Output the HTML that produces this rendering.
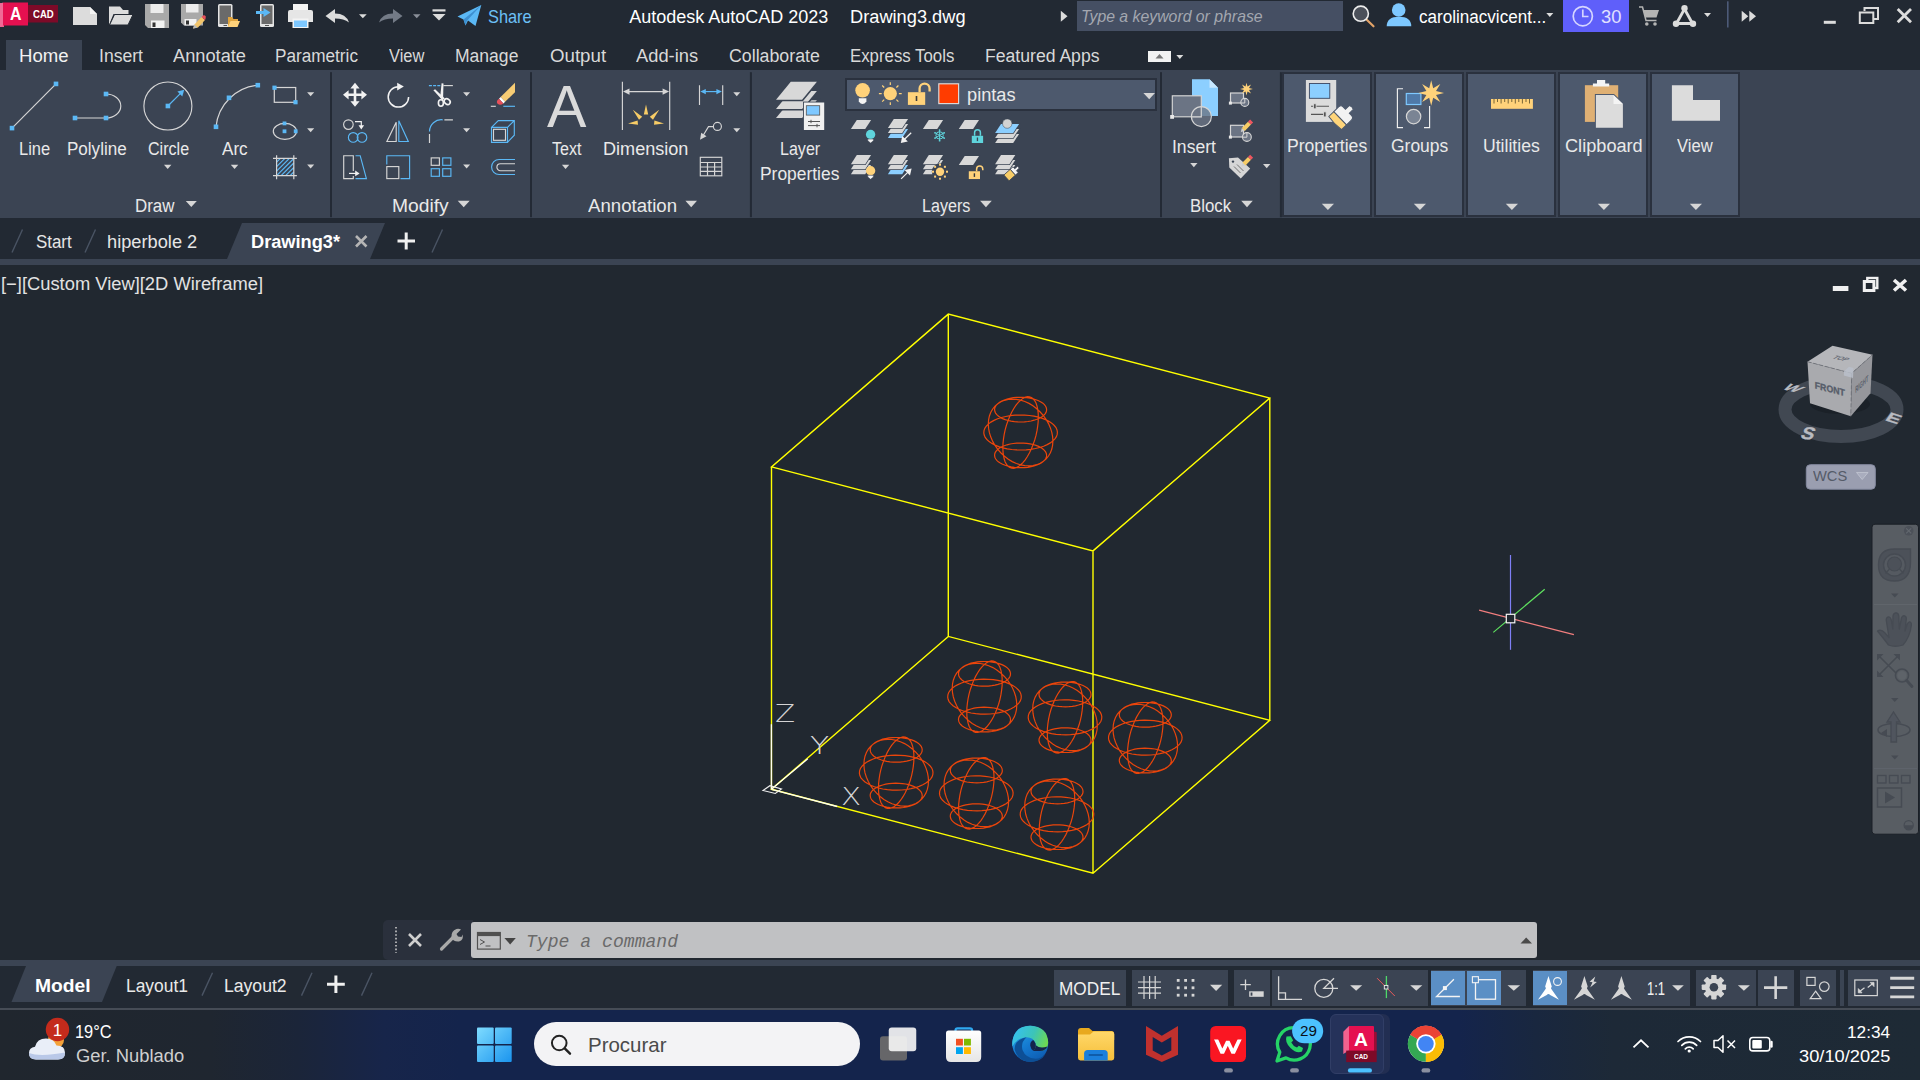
<!DOCTYPE html>
<html lang="en"><head><meta charset="utf-8"><title>Autodesk AutoCAD 2023 - Drawing3.dwg</title>
<style>
html,body{margin:0;padding:0;width:1920px;height:1080px;overflow:hidden;background:#212830;font-family:"Liberation Sans",sans-serif}
#app{position:relative;width:1920px;height:1080px;overflow:hidden}
#app>div{position:absolute;box-sizing:border-box}
#ov{position:absolute;left:0;top:0}
.t{position:absolute;white-space:pre;transform-origin:0 50%;display:block}
</style></head><body><div id="app">
<div style="left:0px;top:0px;width:1920px;height:70px;background:#222933;"></div>
<div style="left:0px;top:70px;width:1920px;height:148px;background:#3b4453;"></div>
<div style="left:0px;top:218px;width:1920px;height:41px;background:#222933;"></div>
<div style="left:0px;top:259px;width:1920px;height:6px;background:#3b4453;"></div>
<div style="left:0px;top:265px;width:1920px;height:695px;background:#212830;"></div>
<div style="left:0px;top:960px;width:1920px;height:6px;background:#3b4453;"></div>
<div style="left:0px;top:966px;width:1920px;height:42px;background:#222933;"></div>
<div style="left:1077px;top:1px;width:266px;height:30px;background:#454f63;"></div>
<div style="left:1563px;top:0px;width:66px;height:32px;background:#5f5ffa;"></div>
<div style="left:6px;top:40px;width:76px;height:30px;background:#3b4453;"></div>
<div style="left:1148px;top:51px;width:23px;height:11px;background:#f2f2f2;"></div>
<div style="left:845.3px;top:78.3px;width:311.8px;height:32.3px;background:#4d596d;border:2px solid #2a313e"></div>
<div style="left:1281.7px;top:72.2px;width:90.6px;height:144.8px;background:#4d596d;border:2px solid #2a313e"></div>
<div style="left:1373.7px;top:72.2px;width:90.6px;height:144.8px;background:#4d596d;border:2px solid #2a313e"></div>
<div style="left:1465.7px;top:72.2px;width:90.6px;height:144.8px;background:#4d596d;border:2px solid #2a313e"></div>
<div style="left:1557.7px;top:72.2px;width:90.6px;height:144.8px;background:#4d596d;border:2px solid #2a313e"></div>
<div style="left:1649.7px;top:72.2px;width:90.6px;height:144.8px;background:#4d596d;border:2px solid #2a313e"></div>
<div style="left:383px;top:920px;width:90px;height:40px;background:#2a303c;border-radius:5px 0 0 5px"></div>
<div style="left:471px;top:922px;width:1066px;height:36px;background:#c0c1c3;border-radius:3px"></div>
<div style="left:0px;top:1008px;width:1920px;height:2px;background:#464c56;"></div>
<div style="left:1054.2px;top:970px;width:71.70000000000005px;height:36px;background:#3b4453;"></div>
<div style="left:1132.1px;top:970px;width:95.80000000000018px;height:36px;background:#3b4453;"></div>
<div style="left:1234.2px;top:970px;width:35.700000000000045px;height:36px;background:#3b4453;"></div>
<div style="left:1272.1px;top:970px;width:155.80000000000018px;height:36px;background:#3b4453;"></div>
<div style="left:1430.8px;top:970px;width:95.29999999999995px;height:36px;background:#3b4453;"></div>
<div style="left:1430.8px;top:971px;width:34px;height:33.8px;background:#5b8fc5;"></div>
<div style="left:1466.8px;top:971px;width:34px;height:33.8px;background:#5b8fc5;"></div>
<div style="left:1532.8px;top:970px;width:156.79999999999995px;height:36px;background:#3b4453;"></div>
<div style="left:1532.8px;top:971px;width:34.4px;height:33.8px;background:#5b8fc5;"></div>
<div style="left:1695.7px;top:970px;width:60.09999999999991px;height:36px;background:#3b4453;"></div>
<div style="left:1758.1px;top:970px;width:36.0px;height:36px;background:#3b4453;"></div>
<div style="left:1800.1px;top:970px;width:36.0px;height:36px;background:#3b4453;"></div>
<div style="left:1839.8px;top:970px;width:4.100000000000136px;height:36px;background:#3b4453;"></div>
<div style="left:1848px;top:970px;width:72px;height:36px;background:#3b4453;"></div>
<div style="left:0px;top:1010px;width:1920px;height:70px;background:linear-gradient(90deg,#20262e 0%,#1f2630 11%,#1b2539 15.500%,#17254a 20%,#14244c 24%,#14244c 76%,#19273f 80%,#1d2937 84%,#1e2a35 100%);"></div>
<div style="left:533.75px;top:1022px;width:326.25px;height:44.25px;background:#f3f3f5;border-radius:22.200px"></div>
<div style="left:1337px;top:1014px;width:52.6px;height:59.6px;background:#222e52;border-radius:7px"></div>
<div style="left:1330px;top:1014px;width:53.5px;height:59.6px;background:#25325a;border-radius:6px;border:1px solid #313e66"></div>
<svg id="ov" width="1920" height="1080" viewBox="0 0 1920 1080">
<rect x="0" y="3" width="4" height="24" fill="#f0628f"/>
<path d="M3 2.5H28V25.5H3Z" fill="#e51050"/>
<path d="M0 27L3 25.5V2.5L0 4Z" fill="#f06a96"/>
<rect x="28" y="5" width="30" height="17.5" fill="#7d0a28"/>
<path d="M73 7H90L97 14V25H73Z" fill="#dcdcdc"/><path d="M90 7V14H97Z" fill="#f4f4f4"/>
<path d="M109 25V6.5H120L123 10H128.5V14H113.5L109 25Z" fill="#dcdcdc"/><path d="M114.5 14.5H133L128 25H109.5Z" fill="#dcdcdc" stroke="#222933" stroke-width="1"/>
<path d="M145 4H169V28H148L145 25Z" fill="#a9a9a9"/><rect x="150.5" y="4" width="13" height="9" fill="#ececec"/><rect x="151" y="20.5" width="13.5" height="7.5" fill="#f2f2f2"/><rect x="152.5" y="22.5" width="3" height="4.5" fill="#333"/>
<path d="M181 4H203V25.5H184L181 22.5Z" fill="#a9a9a9"/><rect x="186" y="4" width="12.5" height="8.5" fill="#ececec"/><rect x="184.5" y="19" width="12" height="6.5" fill="#f2f2f2"/><rect x="186" y="20.5" width="3" height="4" fill="#333"/>
<path d="M194.5 24.5L201.5 17L205 20L198 27.5L193 28.5Z" fill="#f2c46a"/><path d="M201.5 17L203 15.5Q204.8 14.8 205.8 16.5L205.5 19L205 20Z" fill="#e8505a"/><path d="M194.5 24.5L193 28.5L197.5 27.7Z" fill="#bbb"/>
<rect x="218" y="4" width="14.5" height="23" rx="1.5" fill="#e4e4e4"/><rect x="219.5" y="5.5" width="11.5" height="18.5" fill="#6a6a6a"/><rect x="223.5" y="25" width="3.5" height="1" fill="#555"/>
<path d="M228 27V17H232L233.5 19H238V21H231Z" fill="#e2a53e"/><path d="M230.5 21H240L237.5 27H228Z" fill="#ffd27a"/>
<rect x="260" y="4" width="14" height="23" rx="1.5" fill="#e4e4e4"/><rect x="261.5" y="5.5" width="11" height="18.5" fill="#6a6a6a"/><rect x="265" y="25" width="4" height="1" fill="#555"/>
<path d="M256 11H263.5V8L270.5 12.5L263.5 17V14H256Z" fill="#5bb8f5"/>
<rect x="293" y="4" width="15" height="8" fill="#f4f4f4"/><path d="M290 10H311Q313 10 313 12V22H288V12Q288 10 290 10Z" fill="#e6e6e6"/><rect x="292.5" y="18.5" width="16" height="9.5" fill="#f4f4f4"/><rect x="294" y="20.5" width="13" height="6.5" fill="#7ec8ff"/>
<path d="M325.5 16L335 9V13.5Q346 13.5 349 22.5Q344 18.5 335 18.5V23Z" fill="#dcdcdc"/>
<path d="M359 14.2H366.7L362.85 18.2Z" fill="#dcdcdc"/>
<path d="M402.5 16L393 9V13.5Q382 13.5 379 22.5Q384 18.5 393 18.5V23Z" fill="#737a86"/>
<path d="M413 14.2H420.5L416.75 18.2Z" fill="#8a8f99"/>
<rect x="432.5" y="9.3" width="13" height="2.2" fill="#dcdcdc"/>
<path d="M432.5 14H445.5L439.0 20.5Z" fill="#dcdcdc"/>
<path d="M457.5 16.5L481.3 5L475.5 26L468 20.5L465.5 25.5L463.5 19.5Z" fill="#5bb8f5"/><path d="M463.5 19.5L481.3 5L467 20.8L465.5 25.5Z" fill="#3d8fd0"/>
<path d="M1060.8 10.8V21.7L1067.5 16.2Z" fill="#dcdcdc"/>
<line x1="1366.5" y1="19.5" x2="1373.5" y2="26.3" stroke="#e3a368" stroke-width="2.2" stroke-linecap="round"/><circle cx="1360.8" cy="13.7" r="7.6" fill="#4b505a" stroke="#ececec" stroke-width="1.6"/>
<circle cx="1398.7" cy="10" r="6.8" fill="#7ec8ff"/><path d="M1386.7 26.3Q1386.7 16.7 1399 16.7Q1411.3 16.7 1411.3 26.3Z" fill="#7ec8ff"/>
<path d="M1546.3 13H1553.3L1549.8 17Z" fill="#dcdcdc"/>
<circle cx="1582.8" cy="16.2" r="9.6" fill="none" stroke="#d5d5ff" stroke-width="1.7"/><path d="M1582.8 9.5V16.5H1588.5" fill="none" stroke="#d5d5ff" stroke-width="1.7"/>
<path d="M1639 7H1642.5L1646 20.5H1656.5" fill="none" stroke="#b4b4b4" stroke-width="1.5"/><path d="M1643.3 10H1659L1656.5 17.5H1645.3Z" fill="#b4b4b4"/><circle cx="1646.8" cy="24" r="1.8" fill="#b4b4b4"/><circle cx="1655" cy="24" r="1.8" fill="#b4b4b4"/>
<path d="M1684.5 9L1676.5 23.5H1692.5Z" fill="none" stroke="#dcdcdc" stroke-width="2.8" stroke-linejoin="round"/><circle cx="1684.5" cy="8.2" r="3.2" fill="#dcdcdc"/><circle cx="1676" cy="23.8" r="3.2" fill="#dcdcdc"/><circle cx="1693" cy="23.8" r="3.2" fill="#dcdcdc"/>
<path d="M1704 13H1711L1707.5 17Z" fill="#dcdcdc"/>
<rect x="1727" y="1.3" width="1.6" height="26.2" fill="#4d5a78"/>
<path d="M1741.7 10.8V21.7L1748.3 16.2ZM1749.3 10.8V21.7L1756 16.2Z" fill="#dcdcdc"/>
<rect x="1823.8" y="20.8" width="12" height="3" fill="#dcdcdc"/>
<path d="M1864.5 11V8H1878V19H1874" fill="none" stroke="#dcdcdc" stroke-width="2"/><rect x="1859.8" y="12.5" width="13.5" height="10.5" fill="none" stroke="#dcdcdc" stroke-width="2"/>
<path d="M1897.7 9L1911 22.3M1911 9L1897.7 22.3" stroke="#dcdcdc" stroke-width="2.8"/>
<path d="M1155.5 58.5H1163.5L1159.5 54Z" fill="#777"/>
<path d="M1176.3 55H1183.3L1179.8 59Z" fill="#dcdcdc"/>
<path d="M227 259L242 223H385L370 259Z" fill="#3b4453"/>
<path d="M12 252.5L22.5 229.5" stroke="#4a5464" stroke-width="1.4"/>
<path d="M85 252.5L95.5 229.5" stroke="#4a5464" stroke-width="1.4"/>
<path d="M432 252.5L442.5 229.5" stroke="#4a5464" stroke-width="1.4"/>
<path d="M356 236L366.5 246.5M366.5 236L356 246.5" stroke="#b5b5b5" stroke-width="2.6"/>
<path d="M397.5 241H415M406.2 232.5V249.5" stroke="#f0f0f0" stroke-width="3"/>
<rect x="1832.8" y="286" width="15.6" height="5" fill="#f0f0f0"/>
<rect x="1867.3" y="278" width="10" height="10" fill="none" stroke="#f0f0f0" stroke-width="2.4"/><rect x="1864.3" y="281.5" width="9.6" height="9" fill="#212830" stroke="#f0f0f0" stroke-width="3"/>
<path d="M1894 280L1906 290.5M1906 280L1894 290.5" stroke="#f0f0f0" stroke-width="3.6"/>
<rect x="330" y="72.2" width="2" height="145" fill="#232a35"/>
<rect x="530" y="72.2" width="2" height="145" fill="#232a35"/>
<rect x="749.9" y="72.2" width="2" height="145" fill="#232a35"/>
<rect x="1160" y="72.2" width="2" height="145" fill="#232a35"/>
<rect x="1279.9" y="72.2" width="2" height="145" fill="#232a35"/>
<path d="M12 128.1L56 83.9" stroke="#d6d6d6" stroke-width="1.15"/>
<rect x="9.70" y="125.80" width="4.6" height="4.6" fill="#5bb8f5"/>
<rect x="53.70" y="81.60" width="4.6" height="4.6" fill="#5bb8f5"/>
<path d="M75 118H106A14.8 12 0 0 0 106 94" fill="none" stroke="#d6d6d6" stroke-width="1.15"/>
<rect x="72.70" y="115.70" width="4.6" height="4.6" fill="#5bb8f5"/>
<rect x="103.70" y="115.70" width="4.6" height="4.6" fill="#5bb8f5"/>
<rect x="103.70" y="91.70" width="4.6" height="4.6" fill="#5bb8f5"/>
<circle cx="167.9" cy="106" r="24" fill="none" stroke="#d6d6d6" stroke-width="1.15"/><path d="M167.9 106L180.5 93.4" stroke="#5bb8f5" stroke-width="1.15"/><path d="M184.2 89.7L182.3 96.5L177.4 91.6Z" fill="#5bb8f5"/>
<rect x="165.60" y="103.70" width="4.6" height="4.6" fill="#5bb8f5"/>
<path d="M216 126.8A46.3 46.3 0 0 1 257.8 85.2" fill="none" stroke="#d6d6d6" stroke-width="1.15"/>
<rect x="213.70" y="124.50" width="4.6" height="4.6" fill="#5bb8f5"/>
<rect x="226.70" y="95.50" width="4.6" height="4.6" fill="#5bb8f5"/>
<rect x="255.50" y="82.90" width="4.6" height="4.6" fill="#5bb8f5"/>
<path d="M164 164.8H171.4L167.7 169Z" fill="#d6d6d6"/>
<path d="M230.8 164.8H238.3L234.55 169Z" fill="#d6d6d6"/>
<path d="M185.8 201H196.8L191.3 207Z" fill="#d6d6d6"/>
<rect x="274.3" y="87.5" width="21.4" height="14.8" fill="none" stroke="#d6d6d6" stroke-width="1.2"/>
<rect x="272.40" y="85.60" width="4.2" height="4.2" fill="#5bb8f5"/>
<rect x="293.40" y="100.10" width="4.2" height="4.2" fill="#5bb8f5"/>
<ellipse cx="284.9" cy="131.3" rx="11.6" ry="8" fill="none" stroke="#d6d6d6" stroke-width="1.2"/>
<rect x="282.60" y="121.50" width="3.8" height="3.8" fill="#5bb8f5"/>
<rect x="282.60" y="129.40" width="3.8" height="3.8" fill="#5bb8f5"/>
<rect x="293.80" y="129.40" width="3.8" height="3.8" fill="#5bb8f5"/>
<path d="M276.6 175.7L293.8 158.5M281.1 175.7L293.8 163.0M285.6 175.7L293.8 167.5M290.1 175.7L293.8 172.0M276.6 171.2L289.4 158.4M276.6 166.7L284.9 158.4M276.6 162.2L280.4 158.4" stroke="#5bb8f5" stroke-width="1.2"/>
<path d="M276.6 155.3V179.2M293.8 155.3V179.2M273 158.4H296.9M273 175.7H296.9" stroke="#d6d6d6" stroke-width="1.2"/>
<path d="M307.1 92.2H314.2L310.65 96.2Z" fill="#d6d6d6"/>
<path d="M463.1 92.2H470.1L466.6 96.2Z" fill="#d6d6d6"/>
<path d="M307.1 128.2H314.2L310.65 132.2Z" fill="#d6d6d6"/>
<path d="M463.1 128.2H470.1L466.6 132.2Z" fill="#d6d6d6"/>
<path d="M307.1 164.4H314.2L310.65 168.4Z" fill="#d6d6d6"/>
<path d="M463.1 164.4H470.1L466.6 168.4Z" fill="#d6d6d6"/>
<g transform="translate(343 82.8)"><path d="M12 0L16.6 5.6H13.3V10.7H18.4V7.4L24 12L18.4 16.6V13.3H13.3V18.4H16.6L12 24L7.4 18.4H10.7V13.3H5.6V16.6L0 12L5.6 7.4V10.7H10.7V5.6H7.4Z" fill="#f2f2f2"/></g>
<g transform="translate(386 82.8)"><path d="M12.4 3.9A10.2 10.2 0 1 0 22.6 14.1" fill="none" stroke="#f2f2f2" stroke-width="1.5"/><path d="M11.2 0L17.8 3.6L11.2 7.6Z" fill="#f2f2f2"/></g>
<g transform="translate(428.9 82.8)"><path d="M0 2.8H11.5" stroke="#5bb8f5" stroke-width="1.15" stroke-dasharray="3 1.2"/><path d="M14.5 2.8H24" stroke="#d6d6d6" stroke-width="1.15"/><path d="M12.7 0.5L14.6 0.8L14.2 14.5L11.2 15.2Z" fill="#f2f2f2"/><path d="M4.5 7.5L6.2 6.5L16 15.8L13.5 17.5Z" fill="#f2f2f2"/><ellipse cx="12" cy="20.2" rx="2.5" ry="3.2" fill="none" stroke="#f2f2f2" stroke-width="1.6"/><ellipse cx="18.3" cy="18.8" rx="2.6" ry="3.2" transform="rotate(-50 18.3 18.8)" fill="none" stroke="#f2f2f2" stroke-width="1.6"/></g>
<g transform="translate(490.8 82.8)"><path d="M0 23.5H5" stroke="#d6d6d6" stroke-width="1.15"/><path d="M12.5 23.5H24.2" stroke="#5bb8f5" stroke-width="1.15"/><path d="M24.2 0V9.5L14.3 19L9.8 14.2Z" fill="#f7cc74"/><path d="M9.8 14.2L14.3 19L12.6 20.6L8.2 15.9Z" fill="#fff"/><path d="M8.2 15.9L12.6 20.6Q9.5 23.3 6.8 21Q4.8 18.6 8.2 15.9Z" fill="#e8505a"/></g>
<g transform="translate(343 119)"><circle cx="5.4" cy="5.6" r="4.8" fill="none" stroke="#d6d6d6" stroke-width="1.15"/><path d="M12 2.6H18.3V7" fill="none" stroke="#f2f2f2" stroke-width="1.15"/><path d="M15.5 6.2H21.1L18.3 10.6Z" fill="#f2f2f2"/><circle cx="10.2" cy="18.4" r="4.8" fill="none" stroke="#5bb8f5" stroke-width="1.15"/><circle cx="19" cy="18.4" r="4.8" fill="none" stroke="#5bb8f5" stroke-width="1.15"/></g>
<g transform="translate(386 119)"><path d="M10.2 3.2V22.5H0.9Z" fill="none" stroke="#d6d6d6" stroke-width="1.15"/><path d="M12.8 1.8V22.5H22.3Z" fill="none" stroke="#5bb8f5" stroke-width="1.15"/></g>
<g transform="translate(428.9 119)"><path d="M0.6 12.5A11.8 11.8 0 0 1 13.8 0.8" fill="none" stroke="#5bb8f5" stroke-width="1.2"/><path d="M0.6 15V23.9M15.5 0.8H24" stroke="#d6d6d6" stroke-width="1.2"/></g>
<g transform="translate(490.8 119)"><path d="M0.7 8.3L7.5 1.6H23.5V16.2L16.7 23.3M16.7 8.3L23.5 1.6M0.7 8.3H16.7V23.3H0.7Z" fill="none" stroke="#5bb8f5" stroke-width="1.15"/><rect x="2.7" y="10.3" width="12" height="11" fill="none" stroke="#d6d6d6" stroke-width="1.15"/></g>
<g transform="translate(343 155)"><path d="M10.3 16V0.7H0.7V23.6H10.3V21" fill="none" stroke="#d6d6d6" stroke-width="1.15"/><path d="M12.5 0.7H17.2L23.4 23.6H12.5" fill="none" stroke="#5bb8f5" stroke-width="1.15"/><path d="M6 18.4H13" stroke="#f2f2f2" stroke-width="1.15"/><path d="M12.2 15.6L16.6 18.4L12.2 21.2Z" fill="#f2f2f2"/></g>
<g transform="translate(386 155)"><path d="M0.8 9.5V0.7H23.6V23.6H14.5" fill="none" stroke="#5bb8f5" stroke-width="1.15"/><rect x="0.8" y="11.6" width="12" height="12" fill="none" stroke="#d6d6d6" stroke-width="1.15"/></g>
<g transform="translate(428.9 155)"><rect x="2.3" y="2.9" width="8.2" height="7.4" fill="none" stroke="#d6d6d6" stroke-width="1.15"/><rect x="13.8" y="2.9" width="8.2" height="7.4" fill="none" stroke="#5bb8f5" stroke-width="1.15"/><rect x="2.3" y="13.7" width="8.2" height="7.6" fill="none" stroke="#5bb8f5" stroke-width="1.15"/><rect x="13.8" y="13.7" width="8.2" height="7.6" fill="none" stroke="#5bb8f5" stroke-width="1.15"/></g>
<g transform="translate(490.8 155)"><path d="M24.2 4.5H8.3A7.5 7.5 0 0 0 8.3 19.5H24.2" fill="none" stroke="#5bb8f5" stroke-width="1.15"/><path d="M24.2 8.7H9.6A3.5 3.5 0 0 0 9.6 15.7H24.2" fill="none" stroke="#d6d6d6" stroke-width="1.15"/></g>
<path d="M457.7 200.7H469.7L463.7 207.3Z" fill="#d6d6d6"/>
<path d="M561.9 164.8H569.3L565.5999999999999 169Z" fill="#d6d6d6"/>
<path d="M622.4 81.8V130M669.7 81.8V130M627 91.6H665" stroke="#d6d6d6" stroke-width="1.15"/><path d="M623 91.6L629.5 88.4V94.8ZM669.1 91.6L662.6 88.4V94.8Z" fill="#d6d6d6"/>
<path d="M646.0 104.5L643.8 114.6L648.2 114.6Z" fill="#f7cc66"/>
<path d="M632.8 109.8L639.0 119.7L642.2 116.7Z" fill="#f7cc66"/>
<path d="M659.2 109.8L649.8 116.7L653.0 119.7Z" fill="#f7cc66"/>
<path d="M628.0 123.4L638.0 124.8L637.6 120.4Z" fill="#f7cc66"/>
<path d="M664.0 123.4L654.4 120.4L654.0 124.8Z" fill="#f7cc66"/>
<path d="M699.5 85.2V104.9M722.7 85.2V104.9" stroke="#d6d6d6" stroke-width="1.15"/><path d="M704 91.6H718" stroke="#5bb8f5" stroke-width="1.15"/><path d="M700.3 91.6L705.8 89V94.2ZM721.9 91.6L716.4 89V94.2Z" fill="#5bb8f5"/>
<path d="M733.3 92.2H740.3L736.8 96.2Z" fill="#d6d6d6"/>
<path d="M733.3 128.2H740.3L736.8 132.2Z" fill="#d6d6d6"/>
<circle cx="717.4" cy="126.4" r="4" fill="none" stroke="#d6d6d6" stroke-width="1.15"/><path d="M713.4 126.6H708.5L702.5 136.5" fill="none" stroke="#d6d6d6" stroke-width="1.15"/><path d="M700 139.8L701.2 132.7L706.5 136.3Z" fill="#d6d6d6"/>
<rect x="700.3" y="157.3" width="21.5" height="18.5" fill="none" stroke="#d6d6d6" stroke-width="1.15"/><path d="M700.3 162.5H721.8M700.3 167H721.8M700.3 171.4H721.8M707.5 162.5V175.8M714.6 162.5V175.8" stroke="#d6d6d6" stroke-width="1.2"/>
<path d="M685.4 200.7H697L691.2 207.3Z" fill="#d6d6d6"/>
<path d="M790.8 100.2H816.9L802.1 118.1H776.0Z" fill="#d8d8d8" stroke="#3b4453" stroke-width="3.2" paint-order="stroke"/>
<path d="M790.8 91.0H816.9L802.1 108.9H776.0Z" fill="#d8d8d8" stroke="#3b4453" stroke-width="3.2" paint-order="stroke"/>
<path d="M790.8 81.8H816.9L802.1 99.7H776.0Z" fill="#d8d8d8" stroke="#3b4453" stroke-width="3.2" paint-order="stroke"/>
<rect x="803" y="101.6" width="22" height="29.2" fill="#3b4453"/><rect x="803.9" y="102.5" width="20.3" height="27.5" fill="#f0f0f0"/><rect x="806.3" y="105.7" width="13.4" height="9.4" fill="#7ec8ff" stroke="#555" stroke-width="0.8"/><path d="M808 121.5H820M808 125.6H820M811 119.8V123.2M817 123.9V127.3" stroke="#555" stroke-width="1"/>
<circle cx="862.6" cy="90.3" r="7.3" fill="#ffd27a"/><path d="M858.8 98.3H866.4V101.5Q862.6 106.5 858.8 101.5Z" fill="#f4f4f4"/>
<circle cx="890.3" cy="93.6" r="6.6" fill="#ffd27a"/><path d="M898.9 93.6L901.7 93.6M896.4 99.7L898.4 101.7M890.3 102.2L890.3 105.0M884.2 99.7L882.2 101.7M881.7 93.6L878.9 93.6M884.2 87.5L882.2 85.5M890.3 85.0L890.3 82.2M896.4 87.5L898.4 85.5" stroke="#ffd27a" stroke-width="1.2"/>
<rect x="907.9" y="92.2" width="17.3" height="12.7" fill="#ffd27a"/><rect x="915.7" y="96" width="1.6" height="5" fill="#3a3a3a"/><path d="M919.6 92.2V88.6A5 5 0 0 1 929.6 88.6V91.5" fill="none" stroke="#ffd27a" stroke-width="2.3"/>
<rect x="938.8" y="83.8" width="19.8" height="19.8" fill="#ff3c00" stroke="#dcdcdc" stroke-width="1.15"/>
<path d="M1143.4 93H1155L1149.2 99.2Z" fill="#d6d6d6"/>
<path d="M856.8 120.0H871.1L865.2 129.1H850.9Z" fill="#d8d8d8" stroke="#3b4453" stroke-width="1.5" paint-order="stroke"/>
<circle cx="870.6" cy="134.5" r="4.7" fill="#5fd4dc"/><path d="M867.8000000000001 139.1H873.4V140.8L870.6 143.1L867.8000000000001 140.8Z" fill="#f4f4f4" stroke="#3b4453" stroke-width="0.5"/>
<path d="M893.8 128.9H908.1L902.2 138.0H887.9Z" fill="#8ccfff" stroke="#3b4453" stroke-width="1.5" paint-order="stroke"/>
<path d="M893.8 123.9H908.1L902.2 133.0H887.9Z" fill="#d8d8d8" stroke="#3b4453" stroke-width="1.5" paint-order="stroke"/>
<path d="M893.8 118.9H908.1L902.2 128.0H887.9Z" fill="#d8d8d8" stroke="#3b4453" stroke-width="1.5" paint-order="stroke"/>
<path d="M911.2 132.8L904 139.8" stroke="#f2f2f2" stroke-width="1.2"/><path d="M900.8 142.9L902.3 135.9L907.8 141.4Z" fill="#f2f2f2"/>
<path d="M928.8 120.0H943.1L937.2 129.1H922.9Z" fill="#d8d8d8" stroke="#3b4453" stroke-width="1.5" paint-order="stroke"/>
<path d="M939.6 130.2L939.6 140.6M935.1 132.8L944.1 138.0M944.1 132.8L935.1 138.0" stroke="#5fd4dc" stroke-width="1"/><circle cx="939.6" cy="135.4" r="3.7" fill="none" stroke="#5fd4dc" stroke-width="1"/><circle cx="944.2" cy="138.1" r="0.9" fill="#5fd4dc"/><circle cx="939.6" cy="140.7" r="0.9" fill="#5fd4dc"/><circle cx="935.0" cy="138.1" r="0.9" fill="#5fd4dc"/><circle cx="935.0" cy="132.8" r="0.9" fill="#5fd4dc"/><circle cx="939.6" cy="130.1" r="0.9" fill="#5fd4dc"/><circle cx="944.2" cy="132.8" r="0.9" fill="#5fd4dc"/>
<path d="M964.7 120.0H979.0L973.1 129.1H958.8Z" fill="#d8d8d8" stroke="#3b4453" stroke-width="1.5" paint-order="stroke"/>
<rect x="971.8" y="135.8" width="11.3" height="7.2" fill="#5fd4dc"/><path d="M974.6 135.8V132.6A2.9 2.9 0 0 1 980.4 132.6V135.800" fill="none" stroke="#5fd4dc" stroke-width="1.5"/><rect x="976.8" y="137.5" width="1.3" height="3.6" fill="#3b4453"/>
<path d="M1001.0 133.9H1019.1L1013.2 143.0H995.1Z" fill="#d8d8d8" stroke="#3b4453" stroke-width="1.5" paint-order="stroke"/>
<path d="M1001.0 128.9H1019.1L1013.2 138.0H995.1Z" fill="#d8d8d8" stroke="#3b4453" stroke-width="1.5" paint-order="stroke"/>
<path d="M1001.0 123.9H1019.1L1013.2 133.0H995.1Z" fill="#8ccfff" stroke="#3b4453" stroke-width="1.5" paint-order="stroke"/>
<circle cx="1007.25" cy="123.6" r="4.7" fill="#d2d2d2" stroke="#3b4453" stroke-width="0.5"/>
<path d="M856.8 165.1H871.1L865.2 174.2H850.9Z" fill="#d8d8d8" stroke="#3b4453" stroke-width="1.5" paint-order="stroke"/>
<path d="M856.8 160.1H871.1L865.2 169.2H850.9Z" fill="#d8d8d8" stroke="#3b4453" stroke-width="1.5" paint-order="stroke"/>
<path d="M856.8 155.1H871.1L865.2 164.2H850.9Z" fill="#d8d8d8" stroke="#3b4453" stroke-width="1.5" paint-order="stroke"/>
<circle cx="870.6" cy="170.7" r="4.7" fill="#ffd27a"/><path d="M867.8000000000001 175.29999999999998H873.4V177.0L870.6 179.29999999999998L867.8000000000001 177.0Z" fill="#f4f4f4" stroke="#3b4453" stroke-width="0.5"/>
<path d="M893.8 165.1H908.1L902.2 174.2H887.9Z" fill="#8ccfff" stroke="#3b4453" stroke-width="1.5" paint-order="stroke"/>
<path d="M893.8 160.1H908.1L902.2 169.2H887.9Z" fill="#d8d8d8" stroke="#3b4453" stroke-width="1.5" paint-order="stroke"/>
<path d="M893.8 155.1H908.1L902.2 164.2H887.9Z" fill="#d8d8d8" stroke="#3b4453" stroke-width="1.5" paint-order="stroke"/>
<path d="M901.1 178.9L908.2 171.9" stroke="#f2f2f2" stroke-width="1.2"/><path d="M911.6 168.5L910 175.6L904.6 170.1Z" fill="#f2f2f2"/>
<path d="M928.8 165.1H943.1L937.2 174.2H922.9Z" fill="#d8d8d8" stroke="#3b4453" stroke-width="1.5" paint-order="stroke"/>
<path d="M928.8 160.1H943.1L937.2 169.2H922.9Z" fill="#d8d8d8" stroke="#3b4453" stroke-width="1.5" paint-order="stroke"/>
<path d="M928.8 155.1H943.1L937.2 164.2H922.9Z" fill="#d8d8d8" stroke="#3b4453" stroke-width="1.5" paint-order="stroke"/>
<circle cx="940" cy="171.7" r="8.2" fill="#3b4453"/><circle cx="940" cy="171.7" r="4.2" fill="#ffd27a"/><rect x="946.0" y="170.7" width="2" height="2" fill="#ffd27a"/><rect x="943.9" y="175.6" width="2" height="2" fill="#ffd27a"/><rect x="939.0" y="177.7" width="2" height="2" fill="#ffd27a"/><rect x="934.1" y="175.6" width="2" height="2" fill="#ffd27a"/><rect x="932.0" y="170.7" width="2" height="2" fill="#ffd27a"/><rect x="934.1" y="165.8" width="2" height="2" fill="#ffd27a"/><rect x="939.0" y="163.7" width="2" height="2" fill="#ffd27a"/><rect x="943.9" y="165.8" width="2" height="2" fill="#ffd27a"/>
<path d="M964.7 156.0H979.0L973.1 165.1H958.8Z" fill="#d8d8d8" stroke="#3b4453" stroke-width="1.5" paint-order="stroke"/>
<rect x="968.8" y="171.25" width="11.2" height="7.8" fill="#ffd27a"/><rect x="973.7" y="173.3" width="1.4" height="3.6" fill="#3a3a3a"/><path d="M976.6 171.25V169.2A3.1 3.1 0 0 1 982.8 169.2V170.300" fill="none" stroke="#ffd27a" stroke-width="1.5"/>
<path d="M1001.0 165.1H1015.3L1009.4 174.2H995.1Z" fill="#d8d8d8" stroke="#3b4453" stroke-width="1.5" paint-order="stroke"/>
<path d="M1001.0 160.1H1015.3L1009.4 169.2H995.1Z" fill="#d8d8d8" stroke="#3b4453" stroke-width="1.5" paint-order="stroke"/>
<path d="M1001.0 155.1H1015.3L1009.4 164.2H995.1Z" fill="#d8d8d8" stroke="#3b4453" stroke-width="1.5" paint-order="stroke"/>
<g transform="translate(1012.5 172.5) rotate(48)"><rect x="-3.9" y="-0.5" width="7.8" height="8.6" fill="#f7cc66" stroke="#3b4453" stroke-width="0.8"/><path d="M-3.9 -0.500V-4.200H-1.300V-8H1.300V-4.200H3.900V-0.500Z" fill="#f4f4f4" stroke="#3b4453" stroke-width="0.8"/></g>
<path d="M980.1 200.7H991.8L985.95 207.3Z" fill="#d6d6d6"/>
<path d="M1192 79.3H1209.5L1218 87.8V115.9H1192Z" fill="#8ccfff"/><path d="M1209.5 79.3V87.8H1218Z" fill="#c8e8ff"/>
<rect x="1172.3" y="95.8" width="29" height="21" fill="#6b7484" stroke="#d6d6d6" stroke-width="1.15"/><circle cx="1201.4" cy="116.6" r="10" fill="#6b7484" fill-opacity="0.8" stroke="#d6d6d6" stroke-width="1.15"/><path d="M1201.3 106.6V116.8H1191.4" fill="none" stroke="#d6d6d6" stroke-width="1.15"/><rect x="1170.2" y="115" width="3.8" height="3.8" fill="#e8e8e8"/>
<path d="M1190.2 163H1197.5L1193.85 167.2Z" fill="#d6d6d6"/>
<rect x="1230.5" y="93" width="13" height="10" fill="#6b7484" stroke="#d6d6d6" stroke-width="1.2"/><circle cx="1244.8" cy="102.4" r="4" fill="#6b7484" stroke="#d6d6d6" stroke-width="1.1"/><path d="M1244.8 98.4V103H1240.8" fill="none" stroke="#d6d6d6" stroke-width="1"/><rect x="1228.9" y="101.6" width="3" height="3" fill="#e8e8e8"/>
<path d="M1246.5 82.7L1247.5 86.6L1251.0 84.6L1249.0 88.1L1252.9 89.1L1249.0 90.1L1251.0 93.6L1247.5 91.6L1246.5 95.5L1245.5 91.6L1242.0 93.6L1244.0 90.1L1240.1 89.1L1244.0 88.1L1242.0 84.6L1245.5 86.6Z" fill="#ffd27a"/>
<rect x="1230.5" y="125.3" width="13" height="11.7" fill="#6b7484" stroke="#d6d6d6" stroke-width="1.2"/><circle cx="1246.9" cy="137" r="4.4" fill="#6b7484" stroke="#d6d6d6" stroke-width="1.1"/><path d="M1246.9 132.6V137.2H1242.5" fill="none" stroke="#d6d6d6" stroke-width="1"/><rect x="1228.9" y="135.6" width="3" height="3" fill="#e8e8e8"/>
<path d="M1240.8 132.0L1244.8 130.9L1241.8 128.0Z" fill="#cfcfcf"/><path d="M1244.8 130.9L1251.0 124.6L1248.0 121.7L1241.8 128.0Z" fill="#f7cc66"/><path d="M1251.0 124.6L1253.1 122.5L1250.1 119.5L1248.0 121.7Z" fill="#ef5660"/>
<path d="M1228.9 158.3L1238 157.4L1250.2 168.6L1240.8 178.6L1229.3 167.4Z" fill="#d6d6d6"/><circle cx="1233" cy="161.6" r="1.2" fill="#3b4453"/><path d="M1234 166.5L1240.5 173M1237 164.5L1243.5 171" stroke="#666" stroke-width="0.9"/>
<path d="M1241.5 166.5L1245.5 165.4L1242.5 162.5Z" fill="#cfcfcf"/><path d="M1245.5 165.4L1251.0 159.8L1248.0 156.9L1242.5 162.5Z" fill="#f7cc66"/><path d="M1251.0 159.8L1253.1 157.7L1250.1 154.7L1248.0 156.9Z" fill="#ef5660"/>
<path d="M1263 164H1270.4L1266.7 168.2Z" fill="#d6d6d6"/>
<path d="M1241.2 200.7H1252.8L1247.0 207.3Z" fill="#d6d6d6"/>
<path d="M1321.8000000000002 203.8H1334.0L1327.9 209.9Z" fill="#d6d6d6"/>
<path d="M1413.8000000000002 203.8H1426.0L1419.9 209.9Z" fill="#d6d6d6"/>
<path d="M1505.8000000000002 203.8H1518.0L1511.9 209.9Z" fill="#d6d6d6"/>
<path d="M1597.8000000000002 203.8H1610.0L1603.9 209.9Z" fill="#d6d6d6"/>
<path d="M1689.8000000000002 203.8H1702.0L1695.9 209.9Z" fill="#d6d6d6"/>
<rect x="1305.9" y="80" width="30.3" height="41.9" fill="#dcdcdc"/><rect x="1309.4" y="83.5" width="20.4" height="14.8" fill="#8ccfff" stroke="#3a4660" stroke-width="0.9"/><path d="M1311 106.300H1329M1311 114.400H1325" stroke="#555" stroke-width="1.1"/><rect x="1313.500" y="103.800" width="2.600" height="5" fill="#555" stroke="#dcdcdc" stroke-width="0.8"/><rect x="1323.500" y="111.900" width="2.600" height="5" fill="#555" stroke="#dcdcdc" stroke-width="0.8"/>
<g transform="translate(1340.2 118.2) rotate(46)"><path d="M-9.200 0H9.200V7Q0 8.500 -9.200 7Z" fill="#ffd57a" stroke="#4d596d" stroke-width="1"/><path d="M-9.200 0V-7Q-9.200 -10 -6.200 -10H-2.800V-15.500Q0 -17 2.800 -15.500V-10H6.200Q9.200 -10 9.200 -7V0Z" fill="#f2f2f2" stroke="#4d596d" stroke-width="1"/></g>
<path d="M1403 88.7H1397.4V127.6H1403M1424 127.6H1429.6V106" fill="none" stroke="#f0f0f0" stroke-width="1.15"/><rect x="1406.3" y="93.5" width="14.6" height="11" fill="#4f79a8" stroke="#7ec8ff" stroke-width="1.2"/><circle cx="1413.6" cy="116.6" r="7.2" fill="#7a8494" stroke="#d6d6d6" stroke-width="1.2"/>
<path d="M1431.2 80.2L1433.2 88.2L1440.3 83.9L1436.0 91.0L1444.0 93.0L1436.0 95.0L1440.3 102.1L1433.2 97.8L1431.2 105.8L1429.2 97.8L1422.1 102.1L1426.4 95.0L1418.4 93.0L1426.4 91.0L1422.1 83.9L1429.2 88.2Z" fill="#ffd27a"/>
<rect x="1491" y="99" width="41.9" height="9.8" fill="#ffd27a"/><path d="M1494.0 99V103.5M1497.5 99V102.0M1501.1 99V103.5M1504.7 99V102.0M1508.2 99V103.5M1511.8 99V102.0M1515.3 99V103.5M1518.8 99V102.0M1522.4 99V103.5M1526.0 99V102.0M1529.5 99V103.5" stroke="#6a5a30" stroke-width="0.9"/>
<rect x="1584.9" y="85.2" width="33.3" height="36.7" fill="#dfb074"/><path d="M1592.9 86.6V83.6H1597V80H1605.2V83.6H1609.2V86.6Z" fill="#f4f4f4"/><path d="M1594.9 94H1614L1623.9 103.5V128.8H1594.9Z" fill="#4d596d"/><path d="M1595.9 95H1613.5L1622.9 104V127.8H1595.9Z" fill="#dcdcdc"/><path d="M1613.5 95V104H1622.9Z" fill="#f4f4f4"/>
<path d="M1671.9 85.2H1693V100.1H1720V120.8H1671.9Z" fill="#dcdcdc"/>
<path d="M771.5 789.2L1093.0 873.2L1269.8 720.4L948.3 636.4ZM771.5 466.9L1093.0 550.9L1269.8 398.1L948.3 314.1ZM771.5 789.2L771.5 466.9M1093.0 873.2L1093.0 550.9M1269.8 720.4L1269.8 398.1M948.3 636.4L948.3 314.1" fill="none" stroke="#ffff00" stroke-width="1.4"/>
<path d="M1052.9 440.9L1054.9 438.9L1056.4 436.7L1057.2 434.4L1057.4 432.1L1057.0 429.9L1056.0 427.6L1054.3 425.5L1052.1 423.4L1049.3 421.6L1046.1 419.9L1042.4 418.4L1038.3 417.2L1034.0 416.2L1029.4 415.5L1024.6 415.1L1019.8 415.0L1015.0 415.2L1010.3 415.7L1005.8 416.5L1001.5 417.5L997.6 418.8L994.0 420.4L990.9 422.1L988.3 424.1L986.3 426.1L984.8 428.3L984.0 430.6L983.8 432.9L984.2 435.1L985.2 437.4L986.9 439.5L989.1 441.6L991.9 443.4L995.1 445.1L998.8 446.6L1002.9 447.8L1007.2 448.8L1011.8 449.5L1016.6 449.9L1021.4 450.0L1026.2 449.8L1030.9 449.3L1035.4 448.5L1039.7 447.5L1043.6 446.2L1047.2 444.6L1050.3 442.9ZM1043.4 415.6L1044.9 414.1L1045.9 412.6L1046.5 411.0L1046.6 409.4L1046.3 407.8L1045.6 406.2L1044.4 404.7L1042.9 403.2L1040.9 401.9L1038.6 400.7L1036.0 399.7L1033.1 398.8L1030.1 398.1L1026.8 397.6L1023.5 397.3L1020.1 397.3L1016.7 397.4L1013.3 397.7L1010.1 398.3L1007.1 399.0L1004.3 400.0L1001.8 401.1L999.6 402.3L997.8 403.7L996.3 405.1L995.3 406.7L994.7 408.3L994.6 409.9L994.9 411.5L995.6 413.1L996.8 414.6L998.3 416.0L1000.3 417.4L1002.6 418.6L1005.2 419.6L1008.1 420.5L1011.1 421.2L1014.4 421.6L1017.7 421.9L1021.1 422.0L1024.5 421.9L1027.9 421.5L1031.1 421.0L1034.1 420.2L1036.9 419.3L1039.4 418.2L1041.6 417.0ZM1043.4 461.3L1044.9 459.9L1045.9 458.3L1046.5 456.7L1046.6 455.1L1046.3 453.5L1045.6 451.9L1044.4 450.4L1042.9 449.0L1040.9 447.6L1038.6 446.4L1036.0 445.4L1033.1 444.5L1030.1 443.8L1026.8 443.4L1023.5 443.1L1020.1 443.0L1016.7 443.1L1013.3 443.5L1010.1 444.0L1007.1 444.8L1004.3 445.7L1001.8 446.8L999.6 448.0L997.8 449.4L996.3 450.9L995.3 452.4L994.7 454.0L994.6 455.6L994.9 457.2L995.6 458.8L996.8 460.3L998.3 461.8L1000.3 463.1L1002.6 464.3L1005.2 465.3L1008.1 466.2L1011.1 466.9L1014.4 467.4L1017.7 467.7L1021.1 467.7L1024.5 467.6L1027.9 467.3L1031.1 466.7L1034.1 466.0L1036.9 465.0L1039.4 463.9L1041.6 462.7ZM1052.9 440.9L1052.6 436.6L1051.8 432.3L1050.4 427.9L1048.5 423.6L1046.2 419.5L1043.4 415.6L1040.2 412.0L1036.7 408.7L1032.9 405.8L1029.0 403.4L1024.8 401.5L1020.6 400.2L1016.4 399.3L1012.2 399.1L1008.3 399.4L1004.5 400.3L1001.0 401.7L997.8 403.7L995.0 406.1L992.7 409.0L990.8 412.3L989.4 416.0L988.6 419.9L988.3 424.1L988.6 428.4L989.4 432.7L990.8 437.1L992.7 441.4L995.0 445.5L997.8 449.4L1001.0 453.0L1004.5 456.3L1008.3 459.2L1012.2 461.6L1016.4 463.5L1020.6 464.8L1024.8 465.7L1029.0 465.9L1032.9 465.6L1036.7 464.7L1040.2 463.3L1043.4 461.3L1046.2 458.9L1048.5 456.0L1050.4 452.7L1051.8 449.0L1052.6 445.1ZM1038.3 417.2L1038.2 413.1L1037.7 409.3L1037.0 406.0L1036.0 403.0L1034.7 400.6L1033.1 398.8L1031.4 397.5L1029.5 396.8L1027.4 396.7L1025.2 397.3L1022.9 398.4L1020.6 400.2L1018.3 402.4L1016.0 405.2L1013.8 408.5L1011.7 412.2L1009.8 416.2L1008.1 420.5L1006.5 425.0L1005.2 429.6L1004.2 434.3L1003.5 438.9L1003.0 443.5L1002.9 447.8L1003.0 451.9L1003.5 455.7L1004.2 459.0L1005.2 462.0L1006.5 464.4L1008.1 466.2L1009.8 467.5L1011.7 468.2L1013.8 468.3L1016.0 467.7L1018.3 466.6L1020.6 464.8L1022.9 462.6L1025.2 459.8L1027.4 456.5L1029.5 452.8L1031.4 448.8L1033.1 444.5L1034.7 440.0L1036.0 435.4L1037.0 430.7L1037.7 426.1L1038.2 421.5Z" fill="none" stroke="#ea450b" stroke-width="1.2"/>
<path d="M1016.8 705.1L1018.8 703.1L1020.3 700.9L1021.1 698.6L1021.3 696.3L1020.9 694.1L1019.9 691.8L1018.2 689.7L1016.0 687.6L1013.2 685.8L1010.0 684.1L1006.3 682.6L1002.2 681.4L997.9 680.4L993.3 679.7L988.5 679.3L983.7 679.2L978.9 679.4L974.2 679.9L969.7 680.7L965.4 681.7L961.5 683.0L957.9 684.6L954.8 686.3L952.2 688.3L950.2 690.3L948.7 692.5L947.9 694.8L947.7 697.1L948.1 699.3L949.1 701.6L950.8 703.7L953.0 705.8L955.8 707.6L959.0 709.3L962.7 710.8L966.8 712.0L971.1 713.0L975.7 713.7L980.5 714.1L985.3 714.2L990.1 714.0L994.8 713.5L999.3 712.7L1003.6 711.7L1007.5 710.4L1011.1 708.8L1014.2 707.1ZM1007.3 679.8L1008.8 678.3L1009.8 676.8L1010.4 675.2L1010.5 673.6L1010.2 672.0L1009.5 670.4L1008.3 668.9L1006.8 667.4L1004.8 666.1L1002.5 664.9L999.9 663.9L997.0 663.0L994.0 662.3L990.7 661.8L987.4 661.5L984.0 661.5L980.6 661.6L977.2 661.9L974.0 662.5L971.0 663.2L968.2 664.2L965.7 665.3L963.5 666.5L961.7 667.9L960.2 669.3L959.2 670.9L958.6 672.5L958.5 674.1L958.8 675.7L959.5 677.3L960.7 678.8L962.2 680.2L964.2 681.6L966.5 682.8L969.1 683.8L972.0 684.7L975.0 685.4L978.3 685.8L981.6 686.1L985.0 686.2L988.4 686.1L991.8 685.7L995.0 685.2L998.0 684.4L1000.8 683.5L1003.3 682.4L1005.5 681.2ZM1007.3 725.5L1008.8 724.1L1009.8 722.5L1010.4 720.9L1010.5 719.3L1010.2 717.7L1009.5 716.1L1008.3 714.6L1006.8 713.2L1004.8 711.8L1002.5 710.6L999.9 709.6L997.0 708.7L994.0 708.0L990.7 707.6L987.4 707.3L984.0 707.2L980.6 707.3L977.2 707.7L974.0 708.2L971.0 709.0L968.2 709.9L965.7 711.0L963.5 712.2L961.7 713.6L960.2 715.1L959.2 716.6L958.6 718.2L958.5 719.8L958.8 721.4L959.5 723.0L960.7 724.5L962.2 726.0L964.2 727.3L966.5 728.5L969.1 729.5L972.0 730.4L975.0 731.1L978.3 731.6L981.6 731.9L985.0 731.9L988.4 731.8L991.8 731.5L995.0 730.9L998.0 730.2L1000.8 729.2L1003.3 728.1L1005.5 726.9ZM1016.8 705.1L1016.5 700.8L1015.7 696.5L1014.3 692.1L1012.4 687.8L1010.1 683.7L1007.3 679.8L1004.1 676.2L1000.6 672.9L996.8 670.0L992.9 667.6L988.7 665.7L984.5 664.4L980.3 663.5L976.1 663.3L972.2 663.6L968.4 664.5L964.9 665.9L961.7 667.9L958.9 670.3L956.6 673.2L954.7 676.5L953.3 680.2L952.5 684.1L952.2 688.3L952.5 692.6L953.3 696.9L954.7 701.3L956.6 705.6L958.9 709.7L961.7 713.6L964.9 717.2L968.4 720.5L972.2 723.4L976.1 725.8L980.3 727.7L984.5 729.0L988.7 729.9L992.9 730.1L996.8 729.8L1000.6 728.9L1004.1 727.5L1007.3 725.5L1010.1 723.1L1012.4 720.2L1014.3 716.9L1015.7 713.2L1016.5 709.3ZM1002.2 681.4L1002.1 677.3L1001.6 673.5L1000.9 670.2L999.9 667.2L998.6 664.8L997.0 663.0L995.3 661.7L993.4 661.0L991.3 660.9L989.1 661.5L986.8 662.6L984.5 664.4L982.2 666.6L979.9 669.4L977.7 672.7L975.6 676.4L973.7 680.4L972.0 684.7L970.4 689.2L969.1 693.8L968.1 698.5L967.4 703.1L966.9 707.7L966.8 712.0L966.9 716.1L967.4 719.9L968.1 723.2L969.1 726.2L970.4 728.6L972.0 730.4L973.7 731.7L975.6 732.4L977.7 732.5L979.9 731.9L982.2 730.8L984.5 729.0L986.8 726.8L989.1 724.0L991.3 720.7L993.4 717.0L995.3 713.0L997.0 708.7L998.6 704.2L999.9 699.6L1000.9 694.9L1001.6 690.3L1002.1 685.7Z" fill="none" stroke="#ea450b" stroke-width="1.2"/>
<path d="M1097.3 725.7L1099.3 723.7L1100.8 721.5L1101.6 719.2L1101.8 716.9L1101.4 714.7L1100.4 712.4L1098.7 710.3L1096.5 708.2L1093.7 706.4L1090.5 704.7L1086.8 703.2L1082.7 702.0L1078.4 701.0L1073.8 700.3L1069.0 699.9L1064.2 699.8L1059.4 700.0L1054.7 700.5L1050.2 701.3L1045.9 702.3L1042.0 703.6L1038.4 705.2L1035.3 706.9L1032.7 708.9L1030.7 710.9L1029.2 713.1L1028.4 715.4L1028.2 717.7L1028.6 719.9L1029.6 722.2L1031.3 724.3L1033.5 726.4L1036.3 728.2L1039.5 729.9L1043.2 731.4L1047.3 732.6L1051.6 733.6L1056.2 734.3L1061.0 734.7L1065.8 734.8L1070.6 734.6L1075.3 734.1L1079.8 733.3L1084.1 732.3L1088.0 731.0L1091.6 729.4L1094.7 727.7ZM1087.8 700.4L1089.3 698.9L1090.3 697.4L1090.9 695.8L1091.0 694.2L1090.7 692.6L1090.0 691.0L1088.8 689.5L1087.3 688.0L1085.3 686.7L1083.0 685.5L1080.4 684.5L1077.5 683.6L1074.5 682.9L1071.2 682.4L1067.9 682.1L1064.5 682.1L1061.1 682.2L1057.7 682.5L1054.5 683.1L1051.5 683.8L1048.7 684.8L1046.2 685.9L1044.0 687.1L1042.2 688.5L1040.7 689.9L1039.7 691.5L1039.1 693.1L1039.0 694.7L1039.3 696.3L1040.0 697.9L1041.2 699.4L1042.7 700.8L1044.7 702.2L1047.0 703.4L1049.6 704.4L1052.5 705.3L1055.5 706.0L1058.8 706.4L1062.1 706.7L1065.5 706.8L1068.9 706.7L1072.3 706.3L1075.5 705.8L1078.5 705.0L1081.3 704.1L1083.8 703.0L1086.0 701.8ZM1087.8 746.1L1089.3 744.7L1090.3 743.1L1090.9 741.5L1091.0 739.9L1090.7 738.3L1090.0 736.7L1088.8 735.2L1087.3 733.8L1085.3 732.4L1083.0 731.2L1080.4 730.2L1077.5 729.3L1074.5 728.6L1071.2 728.2L1067.9 727.9L1064.5 727.8L1061.1 727.9L1057.7 728.3L1054.5 728.8L1051.5 729.6L1048.7 730.5L1046.2 731.6L1044.0 732.8L1042.2 734.2L1040.7 735.7L1039.7 737.2L1039.1 738.8L1039.0 740.4L1039.3 742.0L1040.0 743.6L1041.2 745.1L1042.7 746.6L1044.7 747.9L1047.0 749.1L1049.6 750.1L1052.5 751.0L1055.5 751.7L1058.8 752.2L1062.1 752.5L1065.5 752.5L1068.9 752.4L1072.3 752.1L1075.5 751.5L1078.5 750.8L1081.3 749.8L1083.8 748.7L1086.0 747.5ZM1097.3 725.7L1097.0 721.4L1096.2 717.1L1094.8 712.7L1092.9 708.4L1090.6 704.3L1087.8 700.4L1084.6 696.8L1081.1 693.5L1077.3 690.6L1073.4 688.2L1069.2 686.3L1065.0 685.0L1060.8 684.1L1056.6 683.9L1052.7 684.2L1048.9 685.1L1045.4 686.5L1042.2 688.5L1039.4 690.9L1037.1 693.8L1035.2 697.1L1033.8 700.8L1033.0 704.7L1032.7 708.9L1033.0 713.2L1033.8 717.5L1035.2 721.9L1037.1 726.2L1039.4 730.3L1042.2 734.2L1045.4 737.8L1048.9 741.1L1052.7 744.0L1056.6 746.4L1060.8 748.3L1065.0 749.6L1069.2 750.5L1073.4 750.7L1077.3 750.4L1081.1 749.5L1084.6 748.1L1087.8 746.1L1090.6 743.7L1092.9 740.8L1094.8 737.5L1096.2 733.8L1097.0 729.9ZM1082.7 702.0L1082.6 697.9L1082.1 694.1L1081.4 690.8L1080.4 687.8L1079.1 685.4L1077.5 683.6L1075.8 682.3L1073.9 681.6L1071.8 681.5L1069.6 682.1L1067.3 683.2L1065.0 685.0L1062.7 687.2L1060.4 690.0L1058.2 693.3L1056.1 697.0L1054.2 701.0L1052.5 705.3L1050.9 709.8L1049.6 714.4L1048.6 719.1L1047.9 723.7L1047.4 728.3L1047.3 732.6L1047.4 736.7L1047.9 740.5L1048.6 743.8L1049.6 746.8L1050.9 749.2L1052.5 751.0L1054.2 752.3L1056.1 753.0L1058.2 753.1L1060.4 752.5L1062.7 751.4L1065.0 749.6L1067.3 747.4L1069.6 744.6L1071.8 741.3L1073.9 737.6L1075.8 733.6L1077.5 729.3L1079.1 724.8L1080.4 720.2L1081.4 715.5L1082.1 710.9L1082.6 706.3Z" fill="none" stroke="#ea450b" stroke-width="1.2"/>
<path d="M1177.6 746.1L1179.6 744.1L1181.1 741.9L1181.9 739.6L1182.1 737.3L1181.7 735.1L1180.7 732.8L1179.0 730.7L1176.8 728.6L1174.0 726.8L1170.8 725.1L1167.1 723.6L1163.0 722.4L1158.7 721.4L1154.1 720.7L1149.3 720.3L1144.5 720.2L1139.7 720.4L1135.0 720.9L1130.5 721.7L1126.2 722.7L1122.3 724.0L1118.7 725.6L1115.6 727.3L1113.0 729.3L1111.0 731.3L1109.5 733.5L1108.7 735.8L1108.5 738.1L1108.9 740.3L1109.9 742.6L1111.6 744.7L1113.8 746.8L1116.6 748.6L1119.8 750.3L1123.5 751.8L1127.6 753.0L1131.9 754.0L1136.5 754.7L1141.3 755.1L1146.1 755.2L1150.9 755.0L1155.6 754.5L1160.1 753.7L1164.4 752.7L1168.3 751.4L1171.9 749.8L1175.0 748.1ZM1168.1 720.8L1169.6 719.3L1170.6 717.8L1171.2 716.2L1171.3 714.6L1171.0 713.0L1170.3 711.4L1169.1 709.9L1167.6 708.4L1165.6 707.1L1163.3 705.9L1160.7 704.9L1157.8 704.0L1154.8 703.3L1151.5 702.8L1148.2 702.5L1144.8 702.5L1141.4 702.6L1138.0 702.9L1134.8 703.5L1131.8 704.2L1129.0 705.2L1126.5 706.3L1124.3 707.5L1122.5 708.9L1121.0 710.3L1120.0 711.9L1119.4 713.5L1119.3 715.1L1119.6 716.7L1120.3 718.3L1121.5 719.8L1123.0 721.2L1125.0 722.6L1127.3 723.8L1129.9 724.8L1132.8 725.7L1135.8 726.4L1139.1 726.8L1142.4 727.1L1145.8 727.2L1149.2 727.1L1152.6 726.7L1155.8 726.2L1158.8 725.4L1161.6 724.5L1164.1 723.4L1166.3 722.2ZM1168.1 766.5L1169.6 765.1L1170.6 763.5L1171.2 761.9L1171.3 760.3L1171.0 758.7L1170.3 757.1L1169.1 755.6L1167.6 754.2L1165.6 752.8L1163.3 751.6L1160.7 750.6L1157.8 749.7L1154.8 749.0L1151.5 748.6L1148.2 748.3L1144.8 748.2L1141.4 748.3L1138.0 748.7L1134.8 749.2L1131.8 750.0L1129.0 750.9L1126.5 752.0L1124.3 753.2L1122.5 754.6L1121.0 756.1L1120.0 757.6L1119.4 759.2L1119.3 760.8L1119.6 762.4L1120.3 764.0L1121.5 765.5L1123.0 767.0L1125.0 768.3L1127.3 769.5L1129.9 770.5L1132.8 771.4L1135.8 772.1L1139.1 772.6L1142.4 772.9L1145.8 772.9L1149.2 772.8L1152.6 772.5L1155.8 771.9L1158.8 771.2L1161.6 770.2L1164.1 769.1L1166.3 767.9ZM1177.6 746.1L1177.3 741.8L1176.5 737.5L1175.1 733.1L1173.2 728.8L1170.9 724.7L1168.1 720.8L1164.9 717.2L1161.4 713.9L1157.6 711.0L1153.7 708.6L1149.5 706.7L1145.3 705.4L1141.1 704.5L1136.9 704.3L1133.0 704.6L1129.2 705.5L1125.7 706.9L1122.5 708.9L1119.7 711.3L1117.4 714.2L1115.5 717.5L1114.1 721.2L1113.3 725.1L1113.0 729.3L1113.3 733.6L1114.1 737.9L1115.5 742.3L1117.4 746.6L1119.7 750.7L1122.5 754.6L1125.7 758.2L1129.2 761.5L1133.0 764.4L1136.9 766.8L1141.1 768.7L1145.3 770.0L1149.5 770.9L1153.7 771.1L1157.6 770.8L1161.4 769.9L1164.9 768.5L1168.1 766.5L1170.9 764.1L1173.2 761.2L1175.1 757.9L1176.5 754.2L1177.3 750.3ZM1163.0 722.4L1162.9 718.3L1162.4 714.5L1161.7 711.2L1160.7 708.2L1159.4 705.8L1157.8 704.0L1156.1 702.7L1154.2 702.0L1152.1 701.9L1149.9 702.5L1147.6 703.6L1145.3 705.4L1143.0 707.6L1140.7 710.4L1138.5 713.7L1136.4 717.4L1134.5 721.4L1132.8 725.7L1131.2 730.2L1129.9 734.8L1128.9 739.5L1128.2 744.1L1127.7 748.7L1127.6 753.0L1127.7 757.1L1128.2 760.9L1128.9 764.2L1129.9 767.2L1131.2 769.6L1132.8 771.4L1134.5 772.7L1136.4 773.4L1138.5 773.5L1140.7 772.9L1143.0 771.8L1145.3 770.0L1147.6 767.8L1149.9 765.0L1152.1 761.7L1154.2 758.0L1156.1 754.0L1157.8 749.7L1159.4 745.2L1160.7 740.6L1161.7 735.9L1162.4 731.3L1162.9 726.7Z" fill="none" stroke="#ea450b" stroke-width="1.2"/>
<path d="M928.5 781.1L930.5 779.1L932.0 776.9L932.8 774.6L933.0 772.3L932.6 770.1L931.6 767.8L929.9 765.7L927.7 763.6L924.9 761.8L921.7 760.1L918.0 758.6L913.9 757.4L909.6 756.4L905.0 755.7L900.2 755.3L895.4 755.2L890.6 755.4L885.9 755.9L881.4 756.7L877.1 757.7L873.2 759.0L869.6 760.6L866.5 762.3L863.9 764.3L861.9 766.3L860.4 768.5L859.6 770.8L859.4 773.1L859.8 775.3L860.8 777.6L862.5 779.7L864.7 781.8L867.5 783.6L870.7 785.3L874.4 786.8L878.5 788.0L882.8 789.0L887.4 789.7L892.2 790.1L897.0 790.2L901.8 790.0L906.5 789.5L911.0 788.7L915.3 787.7L919.2 786.4L922.8 784.8L925.9 783.1ZM919.0 755.8L920.5 754.3L921.5 752.8L922.1 751.2L922.2 749.6L921.9 748.0L921.2 746.4L920.0 744.9L918.5 743.4L916.5 742.1L914.2 740.9L911.6 739.9L908.7 739.0L905.7 738.3L902.4 737.8L899.1 737.5L895.7 737.5L892.3 737.6L888.9 737.9L885.7 738.5L882.7 739.2L879.9 740.2L877.4 741.3L875.2 742.5L873.4 743.9L871.9 745.3L870.9 746.9L870.3 748.5L870.2 750.1L870.5 751.7L871.2 753.3L872.4 754.8L873.9 756.2L875.9 757.6L878.2 758.8L880.8 759.8L883.7 760.7L886.7 761.4L890.0 761.8L893.3 762.1L896.7 762.2L900.1 762.1L903.5 761.7L906.7 761.2L909.7 760.4L912.5 759.5L915.0 758.4L917.2 757.2ZM919.0 801.5L920.5 800.1L921.5 798.5L922.1 796.9L922.2 795.3L921.9 793.7L921.2 792.1L920.0 790.6L918.5 789.2L916.5 787.8L914.2 786.6L911.6 785.6L908.7 784.7L905.7 784.0L902.4 783.6L899.1 783.3L895.7 783.2L892.3 783.3L888.9 783.7L885.7 784.2L882.7 785.0L879.9 785.9L877.4 787.0L875.2 788.2L873.4 789.6L871.9 791.1L870.9 792.6L870.3 794.2L870.2 795.8L870.5 797.4L871.2 799.0L872.4 800.5L873.9 802.0L875.9 803.3L878.2 804.5L880.8 805.5L883.7 806.4L886.7 807.1L890.0 807.6L893.3 807.9L896.7 807.9L900.1 807.8L903.5 807.5L906.7 806.9L909.7 806.2L912.5 805.2L915.0 804.1L917.2 802.9ZM928.5 781.1L928.2 776.8L927.4 772.5L926.0 768.1L924.1 763.8L921.8 759.7L919.0 755.8L915.8 752.2L912.3 748.9L908.5 746.0L904.6 743.6L900.4 741.7L896.2 740.4L892.0 739.5L887.8 739.3L883.9 739.6L880.1 740.5L876.6 741.9L873.4 743.9L870.6 746.3L868.3 749.2L866.4 752.5L865.0 756.2L864.2 760.1L863.9 764.3L864.2 768.6L865.0 772.9L866.4 777.3L868.3 781.6L870.6 785.7L873.4 789.6L876.6 793.2L880.1 796.5L883.9 799.4L887.8 801.8L892.0 803.7L896.2 805.0L900.4 805.9L904.6 806.1L908.5 805.8L912.3 804.9L915.8 803.5L919.0 801.5L921.8 799.1L924.1 796.2L926.0 792.9L927.4 789.2L928.2 785.3ZM913.9 757.4L913.8 753.3L913.3 749.5L912.6 746.2L911.6 743.2L910.3 740.8L908.7 739.0L907.0 737.7L905.1 737.0L903.0 736.9L900.8 737.5L898.5 738.6L896.2 740.4L893.9 742.6L891.6 745.4L889.4 748.7L887.3 752.4L885.4 756.4L883.7 760.7L882.1 765.2L880.8 769.8L879.8 774.5L879.1 779.1L878.6 783.7L878.5 788.0L878.6 792.1L879.1 795.9L879.8 799.2L880.8 802.2L882.1 804.6L883.7 806.4L885.4 807.7L887.3 808.4L889.4 808.5L891.6 807.9L893.9 806.8L896.2 805.0L898.5 802.8L900.8 800.0L903.0 796.7L905.1 793.0L907.0 789.0L908.7 784.7L910.3 780.2L911.6 775.6L912.6 770.9L913.3 766.3L913.8 761.7Z" fill="none" stroke="#ea450b" stroke-width="1.2"/>
<path d="M1008.6 801.7L1010.6 799.7L1012.1 797.5L1012.9 795.2L1013.1 792.9L1012.7 790.7L1011.7 788.4L1010.0 786.3L1007.8 784.2L1005.0 782.4L1001.8 780.7L998.1 779.2L994.0 778.0L989.7 777.0L985.1 776.3L980.3 775.9L975.5 775.8L970.7 776.0L966.0 776.5L961.5 777.3L957.2 778.3L953.3 779.6L949.7 781.2L946.6 782.9L944.0 784.9L942.0 786.9L940.5 789.1L939.7 791.4L939.5 793.7L939.9 795.9L940.9 798.2L942.6 800.3L944.8 802.4L947.6 804.2L950.8 805.9L954.5 807.4L958.6 808.6L962.9 809.6L967.5 810.3L972.3 810.7L977.1 810.8L981.9 810.6L986.6 810.1L991.1 809.3L995.4 808.3L999.3 807.0L1002.9 805.4L1006.0 803.7ZM999.1 776.4L1000.6 774.9L1001.6 773.4L1002.2 771.8L1002.3 770.2L1002.0 768.6L1001.3 767.0L1000.1 765.5L998.6 764.0L996.6 762.7L994.3 761.5L991.7 760.5L988.8 759.6L985.8 758.9L982.5 758.4L979.2 758.1L975.8 758.1L972.4 758.2L969.0 758.5L965.8 759.1L962.8 759.8L960.0 760.8L957.5 761.9L955.3 763.1L953.5 764.5L952.0 765.9L951.0 767.5L950.4 769.1L950.3 770.7L950.6 772.3L951.3 773.9L952.5 775.4L954.0 776.8L956.0 778.2L958.3 779.4L960.9 780.4L963.8 781.3L966.8 782.0L970.1 782.4L973.4 782.7L976.8 782.8L980.2 782.7L983.6 782.3L986.8 781.8L989.8 781.0L992.6 780.1L995.1 779.0L997.3 777.8ZM999.1 822.1L1000.6 820.7L1001.6 819.1L1002.2 817.5L1002.3 815.9L1002.0 814.3L1001.3 812.7L1000.1 811.2L998.6 809.8L996.6 808.4L994.3 807.2L991.7 806.2L988.8 805.3L985.8 804.6L982.5 804.2L979.2 803.9L975.8 803.8L972.4 803.9L969.0 804.3L965.8 804.8L962.8 805.6L960.0 806.5L957.5 807.6L955.3 808.8L953.5 810.2L952.0 811.7L951.0 813.2L950.4 814.8L950.3 816.4L950.6 818.0L951.3 819.6L952.5 821.1L954.0 822.6L956.0 823.9L958.3 825.1L960.9 826.1L963.8 827.0L966.8 827.7L970.1 828.2L973.4 828.5L976.8 828.5L980.2 828.4L983.6 828.1L986.8 827.5L989.8 826.8L992.6 825.8L995.1 824.7L997.3 823.5ZM1008.6 801.7L1008.3 797.4L1007.5 793.1L1006.1 788.7L1004.2 784.4L1001.9 780.3L999.1 776.4L995.9 772.8L992.4 769.5L988.6 766.6L984.7 764.2L980.5 762.3L976.3 761.0L972.1 760.1L967.9 759.9L964.0 760.2L960.2 761.1L956.7 762.5L953.5 764.5L950.7 766.9L948.4 769.8L946.5 773.1L945.1 776.8L944.3 780.7L944.0 784.9L944.3 789.2L945.1 793.5L946.5 797.9L948.4 802.2L950.7 806.3L953.5 810.2L956.7 813.8L960.2 817.1L964.0 820.0L967.9 822.4L972.1 824.3L976.3 825.6L980.5 826.5L984.7 826.7L988.6 826.4L992.4 825.5L995.9 824.1L999.1 822.1L1001.9 819.7L1004.2 816.8L1006.1 813.5L1007.5 809.8L1008.3 805.9ZM994.0 778.0L993.9 773.9L993.4 770.1L992.7 766.8L991.7 763.8L990.4 761.4L988.8 759.6L987.1 758.3L985.2 757.6L983.1 757.5L980.9 758.1L978.6 759.2L976.3 761.0L974.0 763.2L971.7 766.0L969.5 769.3L967.4 773.0L965.5 777.0L963.8 781.3L962.2 785.8L960.9 790.4L959.9 795.1L959.2 799.7L958.7 804.3L958.6 808.6L958.7 812.7L959.2 816.5L959.9 819.8L960.9 822.8L962.2 825.2L963.8 827.0L965.5 828.3L967.4 829.0L969.5 829.1L971.7 828.5L974.0 827.4L976.3 825.6L978.6 823.4L980.9 820.6L983.1 817.3L985.2 813.6L987.1 809.6L988.8 805.3L990.4 800.8L991.7 796.2L992.7 791.5L993.4 786.9L993.9 782.3Z" fill="none" stroke="#ea450b" stroke-width="1.2"/>
<path d="M1089.3 822.7L1091.3 820.7L1092.8 818.5L1093.6 816.2L1093.8 813.9L1093.4 811.7L1092.4 809.4L1090.7 807.3L1088.5 805.2L1085.7 803.4L1082.5 801.7L1078.8 800.2L1074.7 799.0L1070.4 798.0L1065.8 797.3L1061.0 796.9L1056.2 796.8L1051.4 797.0L1046.7 797.5L1042.2 798.3L1037.9 799.3L1034.0 800.6L1030.4 802.2L1027.3 803.9L1024.7 805.9L1022.7 807.9L1021.2 810.1L1020.4 812.4L1020.2 814.7L1020.6 816.9L1021.6 819.2L1023.3 821.3L1025.5 823.4L1028.3 825.2L1031.5 826.9L1035.2 828.4L1039.3 829.6L1043.6 830.6L1048.2 831.3L1053.0 831.7L1057.8 831.8L1062.6 831.6L1067.3 831.1L1071.8 830.3L1076.1 829.3L1080.0 828.0L1083.6 826.4L1086.7 824.7ZM1079.8 797.4L1081.3 795.9L1082.3 794.4L1082.9 792.8L1083.0 791.2L1082.7 789.6L1082.0 788.0L1080.8 786.5L1079.3 785.0L1077.3 783.7L1075.0 782.5L1072.4 781.5L1069.5 780.6L1066.5 779.9L1063.2 779.4L1059.9 779.1L1056.5 779.1L1053.1 779.2L1049.7 779.5L1046.5 780.1L1043.5 780.8L1040.7 781.8L1038.2 782.9L1036.0 784.1L1034.2 785.5L1032.7 786.9L1031.7 788.5L1031.1 790.1L1031.0 791.7L1031.3 793.3L1032.0 794.9L1033.2 796.4L1034.7 797.8L1036.7 799.2L1039.0 800.4L1041.6 801.4L1044.5 802.3L1047.5 803.0L1050.8 803.4L1054.1 803.7L1057.5 803.8L1060.9 803.7L1064.3 803.3L1067.5 802.8L1070.5 802.0L1073.3 801.1L1075.8 800.0L1078.0 798.8ZM1079.8 843.1L1081.3 841.7L1082.3 840.1L1082.9 838.5L1083.0 836.9L1082.7 835.3L1082.0 833.7L1080.8 832.2L1079.3 830.8L1077.3 829.4L1075.0 828.2L1072.4 827.2L1069.5 826.3L1066.5 825.6L1063.2 825.2L1059.9 824.9L1056.5 824.8L1053.1 824.9L1049.7 825.3L1046.5 825.8L1043.5 826.6L1040.7 827.5L1038.2 828.6L1036.0 829.8L1034.2 831.2L1032.7 832.7L1031.7 834.2L1031.1 835.8L1031.0 837.4L1031.3 839.0L1032.0 840.6L1033.2 842.1L1034.7 843.6L1036.7 844.9L1039.0 846.1L1041.6 847.1L1044.5 848.0L1047.5 848.7L1050.8 849.2L1054.1 849.5L1057.5 849.5L1060.9 849.4L1064.3 849.1L1067.5 848.5L1070.5 847.8L1073.3 846.8L1075.8 845.7L1078.0 844.5ZM1089.3 822.7L1089.0 818.4L1088.2 814.1L1086.8 809.7L1084.9 805.4L1082.6 801.3L1079.8 797.4L1076.6 793.8L1073.1 790.5L1069.3 787.6L1065.4 785.2L1061.2 783.3L1057.0 782.0L1052.8 781.1L1048.6 780.9L1044.7 781.2L1040.9 782.1L1037.4 783.5L1034.2 785.5L1031.4 787.9L1029.1 790.8L1027.2 794.1L1025.8 797.8L1025.0 801.7L1024.7 805.9L1025.0 810.2L1025.8 814.5L1027.2 818.9L1029.1 823.2L1031.4 827.3L1034.2 831.2L1037.4 834.8L1040.9 838.1L1044.7 841.0L1048.6 843.4L1052.8 845.3L1057.0 846.6L1061.2 847.5L1065.4 847.7L1069.3 847.4L1073.1 846.5L1076.6 845.1L1079.8 843.1L1082.6 840.7L1084.9 837.8L1086.8 834.5L1088.2 830.8L1089.0 826.9ZM1074.7 799.0L1074.6 794.9L1074.1 791.1L1073.4 787.8L1072.4 784.8L1071.1 782.4L1069.5 780.6L1067.8 779.3L1065.9 778.6L1063.8 778.5L1061.6 779.1L1059.3 780.2L1057.0 782.0L1054.7 784.2L1052.4 787.0L1050.2 790.3L1048.1 794.0L1046.2 798.0L1044.5 802.3L1042.9 806.8L1041.6 811.4L1040.6 816.1L1039.9 820.7L1039.4 825.3L1039.3 829.6L1039.4 833.7L1039.9 837.5L1040.6 840.8L1041.6 843.8L1042.9 846.2L1044.5 848.0L1046.2 849.3L1048.1 850.0L1050.2 850.1L1052.4 849.5L1054.7 848.4L1057.0 846.6L1059.3 844.4L1061.6 841.6L1063.8 838.3L1065.9 834.6L1067.8 830.6L1069.5 826.3L1071.1 821.8L1072.4 817.2L1073.4 812.5L1074.1 807.9L1074.6 803.3Z" fill="none" stroke="#ea450b" stroke-width="1.2"/>
<path d="M771.4 789.3V724.3M771.4 789.3L807.8 758.8M771.4 789.3L837.2 806.5" stroke="#fffff0" stroke-width="1.3"/>
<path d="M763 790.5L769.9 785.7L781.5 788.9L775.3 793.5Z" fill="none" stroke="#eeeeee" stroke-width="1.1"/>
<path d="M1510.5 555V649.8" stroke="#7f7ff5" stroke-width="1.2"/><path d="M1493.3 632.4L1544.7 589.2" stroke="#5fe25f" stroke-width="1.2"/><path d="M1479.1 610.2L1573.9 634.7" stroke="#f27e7e" stroke-width="1.2"/><rect x="1506.3" y="614.3" width="8.5" height="8.5" fill="#212830" stroke="#f4f4f4" stroke-width="1.2"/>
<ellipse cx="1841" cy="409.5" rx="56" ry="27" fill="none" stroke="#414852" stroke-width="13"/>
<ellipse cx="1840" cy="404" rx="30" ry="10" fill="#1b2128"/>
<path d="M1807.5 361.7L1832.5 345.8L1872.5 354.7L1851.7 373.3Z" fill="#b5b6ba"/><path d="M1807.5 361.7L1851.7 373.3L1850.8 416.3L1810 403.3Z" fill="#a9aaae"/><path d="M1851.7 373.3L1872.5 354.7L1870.5 393.3L1850.8 416.3Z" fill="#96979c"/>
<path d="M1807.5 361.7L1851.7 373.3L1872.5 354.7M1851.7 373.3L1850.8 416.3" fill="none" stroke="#6c6e76" stroke-width="0.8" stroke-dasharray="4 2"/><path d="M1844 371.3L1849 366.7L1853.5 368L1853 378L1843.8 375.6Z" fill="#babfca" fill-opacity="0.85"/>
<g transform="matrix(1 0.262 0 1 1814.8 388.3)"><text x="0" y="0" font-family="Liberation Sans,sans-serif" font-weight="700" font-size="9.4" fill="#565c69" stroke="#565c69" stroke-width="0.35" textLength="30" lengthAdjust="spacingAndGlyphs">FRONT</text></g>
<g transform="matrix(0.72 -0.68 0 1 1855.3 393.2)"><text x="0" y="0" font-family="Liberation Sans,sans-serif" font-weight="700" font-size="9" fill="#5a5f6b" textLength="18" lengthAdjust="spacingAndGlyphs">RIGHT</text></g>
<g transform="matrix(0.95 0.2 -0.9 0.55 1831.500 358.500)"><text x="0" y="0" font-family="Liberation Sans,sans-serif" font-weight="700" font-size="8" fill="#6a6e78" textLength="15" lengthAdjust="spacingAndGlyphs">TOP</text></g>
<g transform="matrix(0.993 0.245 -0.826 0.487 1781.6 389.1)"><text x="0" y="0" font-family="Liberation Sans,sans-serif" font-weight="700" font-size="16" fill="#b9bbc1" stroke="#b9bbc1" stroke-width="0.3">W</text></g>
<g transform="matrix(1.14 0.16 -0.42 1.0 1799.6 438.3)"><text x="0" y="0" font-family="Liberation Sans,sans-serif" font-weight="700" font-size="17" fill="#b9bbc1" stroke="#b9bbc1" stroke-width="0.3">S</text></g>
<g transform="matrix(1.25 0.41 -0.52 0.72 1884.2 420)"><text x="0" y="0" font-family="Liberation Sans,sans-serif" font-weight="700" font-size="16" fill="#b9bbc1" stroke="#b9bbc1" stroke-width="0.3">E</text></g>
<rect x="1806.3" y="464.7" width="69" height="24.5" rx="4" fill="#9a9eb0" stroke="#858aa0" stroke-width="1"/><path d="M1856.5 472.5H1868L1862.2 479.5Z" fill="#a9adbe" stroke="#c2c5d2" stroke-width="0.8"/>
<rect x="1872" y="524.2" width="46.5" height="310" rx="3" fill="#585d63" stroke="#1a1f26" stroke-width="1"/>
<circle cx="1908.7" cy="530.8" r="4.8" fill="#4c5159"/><path d="M1906.2 528.3L1911.2 533.3M1911.2 528.3L1906.2 533.3" stroke="#62676e" stroke-width="1.2"/>
<path d="M1894.5 549H1910.5V562Q1910.5 581 1894.5 581Q1878.5 581 1878.5 565Q1878.5 549 1894.5 549Z" fill="#4c5159" stroke="#464b53" stroke-width="1.4"/><circle cx="1894.5" cy="565" r="11" fill="#555a61" stroke="#464b53" stroke-width="1.4"/><circle cx="1894.5" cy="564" r="7" fill="#4c5159" stroke="#464b53" stroke-width="1.2"/><path d="M1889.5 569L1885.5 573.5M1899.5 569L1903.5 573.5" stroke="#464b53" stroke-width="1.3"/>
<path d="M1891 593.5H1898.5L1894.75 597.5Z" fill="#464b53"/>
<path d="M1874 604.5H1917" stroke="#60656b" stroke-width="1"/>
<path d="M1877.500 631Q1881 628.5 1885 633L1889 637.5L1886.200 620Q1886.500 616.500 1889.200 617Q1890.800 617.500 1891.300 620L1892.800 629L1893 616Q1893.500 612.800 1896 612.800Q1898.500 612.800 1898.800 616L1899.300 629L1901.500 618Q1902.300 615.300 1904.500 615.800Q1906.500 616.300 1906.300 619L1905 631L1907.300 624Q1908.500 621.300 1910.300 622Q1911.800 622.800 1911.300 625.500Q1910 637 1903 645Q1895 647.500 1888.500 645Q1884 639 1877.500 631Z" fill="#4c5159" stroke="#464b53" stroke-width="1.3" stroke-linejoin="round"/>
<path d="M1879.500 656.500L1897.500 674.500M1897.500 656.500L1879.500 674.500" stroke="#464b53" stroke-width="1.6"/><path d="M1877 654H1883.500L1877 660.500ZM1900 654H1893.500L1900 660.500ZM1877 677H1883.500L1877 670.500Z" fill="#464b53"/><circle cx="1902" cy="675.500" r="6.500" fill="#585d63" stroke="#464b53" stroke-width="1.6"/><circle cx="1902" cy="675.500" r="4.500" fill="#5e6369"/><path d="M1906.700 680.500L1912 686.500" stroke="#464b53" stroke-width="2.800" stroke-linecap="round"/>
<path d="M1891 698H1898.5L1894.75 702Z" fill="#464b53"/>
<ellipse cx="1894" cy="730" rx="16" ry="6.5" fill="none" stroke="#464b53" stroke-width="1.5"/><path d="M1891 742V722H1887L1893.5 712L1900 722H1896.5V742Z" fill="#50555e" stroke="#464b53" stroke-width="1.3"/><path d="M1881 733L1887 729V737Z" fill="#464b53"/>
<path d="M1891 755.5H1898.5L1894.75 759.5Z" fill="#464b53"/>
<path d="M1874 768.5H1917" stroke="#5e636b" stroke-width="1"/>
<rect x="1877.5" y="775.5" width="8.5" height="7.5" fill="none" stroke="#464b53" stroke-width="1.3"/><rect x="1889.500" y="775.5" width="8.5" height="7.5" fill="none" stroke="#464b53" stroke-width="1.3"/><rect x="1901.5" y="775.5" width="8.5" height="7.5" fill="none" stroke="#464b53" stroke-width="1.3"/><rect x="1877.5" y="788" width="24" height="19" fill="none" stroke="#464b53" stroke-width="1.5"/><path d="M1885 791.5V803.5L1895 797.5Z" fill="#464b53"/>
<circle cx="1908.7" cy="825.3" r="4.6" fill="none" stroke="#464b53" stroke-width="1.2"/><path d="M1904.500 825.3H1913V827.5Q1908.7 832 1904.500 827.5Z" fill="#464b53"/>
<path d="M396 927V953" stroke="#c8c8c8" stroke-width="1.6" stroke-dasharray="1.6 2"/>
<path d="M409 934L421 946M421 934L409 946" stroke="#cfcfcf" stroke-width="2.6"/>
<path d="M441.5 949L453 937.5" stroke="#a9a9a9" stroke-width="3.2" stroke-linecap="round"/><path d="M461 929.5L456.5 934L458 936.500L461.5 937L462.500 934.5Q464 940 459 941.500Q453 942 451.500 937Q451 931 456.500 929Q459 928.5 461 929.5Z" fill="#a9a9a9"/>
<rect x="477.5" y="932.5" width="22.8" height="16.6" fill="none" stroke="#505050" stroke-width="1.2"/><rect x="477.5" y="932.5" width="22.8" height="3.6" fill="#505050"/><path d="M480 939.5L484.5 942L480 944.500M485.5 946H490.5" fill="none" stroke="#505050" stroke-width="1"/>
<path d="M504.4 938H515.8L510.09999999999997 944.4Z" fill="#444"/>
<path d="M1520.500 943.500H1532L1526.2 937.500Z" fill="#4a4a4a"/>
<path d="M11.5 1002L26 966H116.700L102 1002Z" fill="#3b4453"/>
<path d="M202 995.6L212.5 972.700" stroke="#4a5464" stroke-width="1.4"/>
<path d="M301.5 995.6L312.0 972.700" stroke="#4a5464" stroke-width="1.4"/>
<path d="M361.5 995.6L372.0 972.700" stroke="#4a5464" stroke-width="1.4"/>
<path d="M327 984.200H344.800M335.900 975.400V992.900" stroke="#f0f0f0" stroke-width="3"/>
<path d="M1144.0 976V999M1149.6 976V999M1155.2 976V999M1138 982.0H1161M1138 987.6H1161M1138 993.2H1161" stroke="#d6d6d6" stroke-width="1.2"/>
<rect x="1176.8" y="979.0" width="2.800" height="2.800" fill="#d6d6d6"/><rect x="1176.8" y="986.4" width="2.800" height="2.800" fill="#d6d6d6"/><rect x="1176.8" y="993.8" width="2.800" height="2.800" fill="#d6d6d6"/><rect x="1184.2" y="979.0" width="2.800" height="2.800" fill="#d6d6d6"/><rect x="1184.2" y="986.4" width="2.800" height="2.800" fill="#d6d6d6"/><rect x="1184.2" y="993.8" width="2.800" height="2.800" fill="#d6d6d6"/><rect x="1191.6" y="979.0" width="2.800" height="2.800" fill="#d6d6d6"/><rect x="1191.6" y="986.4" width="2.800" height="2.800" fill="#d6d6d6"/><rect x="1191.6" y="993.8" width="2.800" height="2.800" fill="#d6d6d6"/>
<path d="M1210 984.7H1222.2L1216.1 991Z" fill="#d6d6d6"/>
<path d="M1240.300 984.700H1250.800M1245.500 979.500V990" stroke="#d6d6d6" stroke-width="1.3"/><rect x="1249.200" y="991.300" width="14.500" height="5.500" fill="#d6d6d6"/><rect x="1250.600" y="992.500" width="1.800" height="3.200" fill="#3b4453"/>
<path d="M1278.600 976.300V999.400H1302M1278.600 992.800H1285.500V999.400" fill="none" stroke="#d6d6d6" stroke-width="1.300"/>
<circle cx="1323.800" cy="988.400" r="9" fill="none" stroke="#d6d6d6" stroke-width="1.300"/><path d="M1334 978.200L1323.800 988.400H1338" fill="none" stroke="#d6d6d6" stroke-width="1.300"/>
<path d="M1350.1 985.2H1362.2L1356.15 990.8Z" fill="#d6d6d6"/>
<path d="M1386.400 976V998.100" stroke="#4fd86a" stroke-width="1.300"/><path d="M1377.100 978.200L1394.800 996" stroke="#e85a5a" stroke-width="1"/><rect x="1384.300" y="985.400" width="3.600" height="3.600" fill="#3b4453" stroke="#f0f0f0" stroke-width="0.900"/>
<path d="M1410.2 985.2H1422.3L1416.25 990.8Z" fill="#d6d6d6"/>
<path d="M1453.900 979.200L1436.500 996.500H1459.900" fill="none" stroke="#f4f4f4" stroke-width="1.300"/><rect x="1442.900" y="986.100" width="4" height="4" fill="#f4f4f4"/>
<rect x="1475.500" y="979.700" width="20" height="19.500" fill="none" stroke="#f4f4f4" stroke-width="1.300"/><rect x="1472.400" y="976.700" width="6" height="6" fill="#5b8fc5" stroke="#f4f4f4" stroke-width="1.100"/>
<path d="M1507.5 985.2H1520.1L1513.8 990.8Z" fill="#d6d6d6"/>
<path d="M1548.45 976L1551.75 986.6L1550.95 988.2L1551.8500000000001 989.8L1558.95 999.8L1550.15 994.9Q1548.45 993.3 1546.75 994.9L1537.95 999.8L1545.05 989.8L1545.95 988.2L1545.15 986.6Z" fill="#ffffff"/>
<circle cx="1557.500" cy="981.500" r="3.900" fill="none" stroke="#f4f4f4" stroke-width="1.100"/>
<path d="M1584.4 976L1587.7 986.6L1586.9 988.2L1587.8000000000002 989.8L1594.9 999.8L1586.1000000000001 994.9Q1584.4 993.3 1582.7 994.9L1573.9 999.8L1581.0 989.8L1581.9 988.2L1581.1000000000001 986.6Z" fill="#d6d6d6"/>
<path d="M1595.300 976.600L1589.600 981.750L1592.500 982.300L1590.200 987.500L1596.800 982L1593.600 981.500Z" fill="#d6d6d6"/>
<path d="M1621.4 976L1624.7 986.6L1623.9 988.2L1624.8000000000002 989.8L1631.9 999.8L1623.1000000000001 994.9Q1621.4 993.3 1619.7 994.9L1610.9 999.8L1618.0 989.8L1618.9 988.2L1618.1000000000001 986.6Z" fill="#d6d6d6"/>
<path d="M1672.1 985.2H1683.8L1677.9499999999998 990.7Z" fill="#d6d6d6"/>
<rect x="1711.2" y="975.0" width="5.400" height="24.400" rx="0.8" transform="rotate(0 1713.9 987.2)" fill="#d6d6d6"/><rect x="1711.2" y="975.0" width="5.400" height="24.400" rx="0.8" transform="rotate(45 1713.9 987.2)" fill="#d6d6d6"/><rect x="1711.2" y="975.0" width="5.400" height="24.400" rx="0.8" transform="rotate(90 1713.9 987.2)" fill="#d6d6d6"/><rect x="1711.2" y="975.0" width="5.400" height="24.400" rx="0.8" transform="rotate(135 1713.9 987.2)" fill="#d6d6d6"/><circle cx="1713.9" cy="987.2" r="9" fill="#d6d6d6"/><circle cx="1713.9" cy="987.2" r="4.300" fill="#3b4453"/>
<path d="M1737.9 985.2H1749.9L1743.9 990.8Z" fill="#d6d6d6"/>
<path d="M1764 987.600H1787.300M1775.650 976.300V999" stroke="#d6d6d6" stroke-width="2.600"/>
<rect x="1806.900" y="977.400" width="8.200" height="8" fill="none" stroke="#d6d6d6" stroke-width="1.200"/><circle cx="1824.300" cy="986.600" r="4.800" fill="none" stroke="#d6d6d6" stroke-width="1.200"/><path d="M1815.600 991.200L1821 998.700H1810.200Z" fill="none" stroke="#d6d6d6" stroke-width="1.200"/>
<rect x="1854.800" y="980" width="22.500" height="15.600" fill="none" stroke="#d6d6d6" stroke-width="1.200"/><path d="M1859 992L1864.500 987.800M1873.200 983.200L1867.700 987.400" stroke="#d6d6d6" stroke-width="1.200"/><path d="M1858.300 992.800V988.600L1862 992.800ZM1874 982.400V986.600L1870.200 982.400Z" fill="#d6d6d6" stroke="#d6d6d6" stroke-width="0.800"/>
<path d="M1890.200 978.300H1914.200M1890.200 987.600H1914.200M1890.200 996.900H1914.200" stroke="#d6d6d6" stroke-width="2.900"/>
<circle cx="56" cy="1040" r="8" fill="#f4a23a"/>
<path d="M36 1059.500Q29 1059.500 29 1053Q29 1047.500 35 1046.800Q37 1038.500 46 1038.500Q54 1038.500 56.500 1045.500Q65 1045.500 65 1052.500Q65 1059.500 58 1059.500Z" fill="#e9eef8"/><path d="M36 1059.500Q29 1059.500 29 1053Q40 1057 65 1052.500Q65 1059.500 58 1059.500Z" fill="#b9c8e8"/>
<circle cx="57.500" cy="1029.500" r="11.700" fill="#c42b1c"/>
<rect x="477" y="1027.5" width="16.700" height="16.500" rx="1" fill="url(#wg)"/>
<rect x="495" y="1027.5" width="16.700" height="16.500" rx="1" fill="url(#wg)"/>
<rect x="477" y="1045.5" width="16.700" height="16.500" rx="1" fill="url(#wg)"/>
<rect x="495" y="1045.5" width="16.700" height="16.500" rx="1" fill="url(#wg)"/>
<defs><linearGradient id="wg" gradientUnits="userSpaceOnUse" x1="477" y1="1027" x2="512" y2="1062"><stop offset="0" stop-color="#7fdcff"/><stop offset="1" stop-color="#1a94ee"/></linearGradient></defs>
<circle cx="559.250" cy="1043" r="7.300" fill="none" stroke="#222" stroke-width="2"/><path d="M564.700 1048.400L570 1053.700" stroke="#222" stroke-width="2.400" stroke-linecap="round"/>
<rect x="880" y="1036.250" width="27" height="24.250" rx="3" fill="#6a6a6a" fill-opacity="0.95"/><rect x="888.750" y="1027.500" width="27.500" height="23.750" rx="3" fill="#f4f4f4" fill-opacity="0.92"/>
<defs><linearGradient id="sg" x1="0" y1="0" x2="0" y2="1"><stop offset="0" stop-color="#ffffff"/><stop offset="1" stop-color="#e6e6e6"/></linearGradient></defs>
<path d="M955.5 1033.500V1030.500Q955.500 1028.400 957.600 1028.400H970Q972.100 1028.400 972.100 1030.500V1033.500" fill="none" stroke="#2fa8f0" stroke-width="2.200"/><path d="M948.500 1030.600H978.700Q981.200 1030.600 981.200 1033.100V1057.100Q981.200 1062.100 976.200 1062.100H951Q946 1062.100 946 1057.100V1033.100Q946 1030.600 948.500 1030.600Z" fill="url(#sg)"/><rect x="956" y="1038.800" width="6.900" height="6.700" fill="#f25022"/><rect x="964" y="1038.800" width="6.900" height="6.700" fill="#7fba00"/><rect x="956" y="1047.200" width="6.900" height="6.800" fill="#00a4ef"/><rect x="964" y="1047.200" width="6.900" height="6.800" fill="#ffb900"/>
<defs><linearGradient id="eg" x1="0" y1="0" x2="0.6" y2="1"><stop offset="0" stop-color="#2aa9e8"/><stop offset="0.6" stop-color="#1479d0"/><stop offset="1" stop-color="#0f5fb4"/></linearGradient><linearGradient id="eg2" x1="0" y1="0.3" x2="1" y2="0.6"><stop offset="0" stop-color="#36c0f0"/><stop offset="0.55" stop-color="#3cc4b8"/><stop offset="1" stop-color="#6fd94e"/></linearGradient></defs>
<circle cx="1030.200" cy="1043.850" r="18" fill="url(#eg)"/>
<path d="M1012.300 1042Q1014 1026 1030.200 1025.850Q1047.500 1026.500 1048.200 1042.500Q1048 1050.500 1040 1051H1033.500Q1036.500 1047.500 1035.500 1043.500Q1033.500 1037.200 1026.500 1037.200Q1017 1037.800 1012.300 1046.500Z" fill="url(#eg2)"/>
<path d="M1031.500 1061.800Q1017.500 1061.500 1014.700 1049.500Q1014.200 1040 1026.500 1037.200Q1020.500 1042.500 1022.500 1050Q1025.500 1058 1035.500 1058.800Q1041.500 1058.500 1045.500 1054.500Q1040.500 1061.500 1031.500 1061.800Z" fill="#0d4f96"/>
<path d="M1033.500 1051Q1036.500 1047.500 1035.500 1043.500Q1034.800 1041.500 1033.200 1040Q1030 1041.800 1030.200 1045.600Q1030.800 1049.500 1033.500 1051Z" fill="#14244c"/><path d="M1033.500 1051H1040Q1045.500 1050.800 1047.400 1046.500Q1040 1049 1035.800 1045.200Q1035.800 1048.500 1033.500 1051Z" fill="#14244c"/>
<defs><linearGradient id="fg" x1="0" y1="0" x2="0" y2="1"><stop offset="0" stop-color="#ffd86a"/><stop offset="1" stop-color="#f6bf3a"/></linearGradient></defs>
<path d="M1078 1031Q1078 1027.900 1081 1027.900H1089L1092.500 1031H1111.500Q1114.200 1031 1114.200 1034V1040H1078Z" fill="#e8a91e"/><path d="M1078 1034.500L1090 1034.500L1093.500 1031.500H1112Q1114.200 1031.500 1114.200 1034V1058Q1114.200 1060.400 1111.800 1060.400H1080.400Q1078 1060.400 1078 1058Z" fill="url(#fg)"/><path d="M1084.100 1060.400V1053.500Q1084.100 1049.900 1087.700 1049.900H1104.100Q1107.700 1049.900 1107.700 1053.500V1060.400Z" fill="#1b7fdc"/><rect x="1088.500" y="1054" width="14.500" height="2" rx="1" fill="#0f5cab"/>
<path d="M1146 1026L1161.800 1035.700L1178 1026V1054.700L1161.800 1062.100L1146 1054.700ZM1152.700 1037.100V1050.600L1161.800 1055.400L1171.300 1050.600V1037.100L1161.800 1042.500Z" fill="#c0312e" fill-rule="evenodd"/>
<rect x="1210.200" y="1026" width="35.800" height="36.100" rx="5.500" fill="#fa1622"/><path d="M1215.400 1037.800L1222.300 1053L1227.800 1041.500L1233.200 1053L1240.400 1037.800" fill="none" stroke="#fff" stroke-width="3.800" stroke-linejoin="miter" stroke-miterlimit="2"/><path d="M1213 1037H1243V1039.500H1213Z" fill="#fa1622"/>
<path d="M1294.100 1027.700A16.200 16.200 0 1 1 1286 1057.900L1277 1061L1279.800 1052.200A16.200 16.200 0 0 1 1294.100 1027.700Z" fill="none" stroke="#25d366" stroke-width="3.300" stroke-linejoin="round"/><path d="M1286.500 1036.500Q1284.500 1042 1290.500 1048Q1296.500 1054 1302 1051.500L1303 1048L1298.800 1045.800L1297 1047.600Q1293.200 1046.200 1291.300 1042.400L1293.200 1040.600L1290.800 1036.300Z" fill="#25d366"/>
<rect x="1292.100" y="1018.800" width="31.100" height="24.400" rx="12.200" fill="#4cc2ff"/>
<path d="M1349 1026H1373Q1374 1026 1374 1027V1054.700H1349Z" fill="#e51050"/><path d="M1343.300 1031.700L1349 1026V1050.600L1343.300 1054Z" fill="#f0628f"/><path d="M1374 1031.500L1376.700 1032.300V1051H1374Z" fill="#9c0c34"/><rect x="1346.200" y="1050.600" width="30.500" height="11.500" fill="#7d0a28"/>
<circle cx="1425.900" cy="1043.850" r="18" fill="#fff"/>
<path d="M1425.9 1043.85L1410.31 1034.85A18 18 0 0 1 1441.49 1034.85Z" fill="#ea4335"/><path d="M1425.9 1043.85L1441.49 1034.85A18 18 0 0 1 1425.90 1061.85Z" fill="#fbbc05"/><path d="M1425.9 1043.85L1425.90 1061.85A18 18 0 0 1 1410.31 1034.85Z" fill="#34a853"/>
<path d="M1410.31 1034.85A18 18 0 0 1 1441.49 1034.85L1434.30 1039.00H1425.90L1417.50 1039.00Z" fill="#ea4335"/>
<path d="M1441.49 1034.85A18 18 0 0 1 1425.90 1061.85L1425.90 1043.95L1434.30 1048.70L1434.30 1039.00Z" fill="#fbbc05"/>
<circle cx="1425.9" cy="1043.85" r="9.700" fill="#fff"/><circle cx="1425.9" cy="1043.85" r="7.850" fill="#4285f4"/>
<rect x="1224.1" y="1068.200" width="8.8" height="4.400" rx="2.200" fill="#8a8fa0"/>
<rect x="1290.1" y="1068.200" width="8.8" height="4.400" rx="2.200" fill="#8a8fa0"/>
<rect x="1421.5" y="1068.200" width="8.8" height="4.400" rx="2.200" fill="#8a8fa0"/>
<rect x="1347.9" y="1068.200" width="24.1" height="4.400" rx="2.200" fill="#4cc2ff"/>
<path d="M1633.500 1047.300L1641 1040.300L1648.500 1047.300" fill="none" stroke="#fff" stroke-width="1.800"/>
<path d="M1678 1041.500A16 16 0 0 1 1700.500 1041.500M1681.800 1045.300A10.500 10.500 0 0 1 1696.700 1045.300M1685.300 1048.800A5.500 5.500 0 0 1 1693.200 1048.800" fill="none" stroke="#fff" stroke-width="1.700" stroke-linecap="round"/><circle cx="1689.200" cy="1051" r="1.600" fill="#fff"/>
<path d="M1714 1040.500H1718L1723 1035.800V1052.200L1718 1047.500H1714Z" fill="none" stroke="#fff" stroke-width="1.500" stroke-linejoin="round"/><path d="M1727.500 1040.500L1735 1048M1735 1040.500L1727.500 1048" stroke="#fff" stroke-width="1.500"/>
<rect x="1749.800" y="1037.500" width="20" height="13.400" rx="3" fill="none" stroke="#fff" stroke-width="1.600"/><rect x="1752.300" y="1040" width="9.500" height="8.400" rx="1" fill="#fff"/><path d="M1771.500 1042V1046.500" stroke="#fff" stroke-width="2.400" stroke-linecap="round"/>
</svg>
<span class="t" style="left:10.00px;top:4px;font-size:19px;line-height:19px;color:#fff;font-weight:700;transform:scaleX(0.8357);">A</span>
<span class="t" style="left:32.80px;top:10px;font-size:10px;line-height:10px;color:#fff;font-weight:700;transform:scaleX(0.9560);">CAD</span>
<span class="t" style="left:488.30px;top:8px;font-size:18.5px;line-height:18.5px;color:#6cc0f7;transform:scaleX(0.8843);">Share</span>
<span class="t" style="left:629.20px;top:8px;font-size:18px;line-height:18px;color:#fff;">Autodesk AutoCAD 2023</span>
<span class="t" style="left:849.79px;top:8px;font-size:18px;line-height:18px;color:#fff;transform:scaleX(1.0130);">Drawing3.dwg</span>
<span class="t" style="left:1080.54px;top:8px;font-size:16.5px;line-height:16.5px;color:#a3a7b0;font-style:italic;transform:scaleX(0.9583);">Type a keyword or phrase</span>
<span class="t" style="left:1418.80px;top:8px;font-size:18px;line-height:18px;color:#fff;transform:scaleX(0.9485);">carolinacvicent...</span>
<span class="t" style="left:1601.30px;top:8px;font-size:18px;line-height:18px;color:#e0e0ff;transform:scaleX(1.0195);">30</span>
<span class="t" style="left:18.97px;top:47px;font-size:18px;line-height:18px;color:#f2f2f2;transform:scaleX(1.0318);">Home</span>
<span class="t" style="left:99.02px;top:47px;font-size:18px;line-height:18px;color:#d9d9d9;transform:scaleX(0.9769);">Insert</span>
<span class="t" style="left:173.00px;top:47px;font-size:18px;line-height:18px;color:#d9d9d9;transform:scaleX(1.0132);">Annotate</span>
<span class="t" style="left:275.05px;top:47px;font-size:18px;line-height:18px;color:#d9d9d9;transform:scaleX(0.9533);">Parametric</span>
<span class="t" style="left:388.70px;top:47px;font-size:18px;line-height:18px;color:#d9d9d9;transform:scaleX(0.9146);">View</span>
<span class="t" style="left:455.33px;top:47px;font-size:18px;line-height:18px;color:#d9d9d9;transform:scaleX(0.9744);">Manage</span>
<span class="t" style="left:549.70px;top:47px;font-size:18px;line-height:18px;color:#d9d9d9;transform:scaleX(1.0382);">Output</span>
<span class="t" style="left:636.20px;top:47px;font-size:18px;line-height:18px;color:#d9d9d9;transform:scaleX(1.0175);">Add-ins</span>
<span class="t" style="left:729.20px;top:47px;font-size:18px;line-height:18px;color:#d9d9d9;transform:scaleX(0.9865);">Collaborate</span>
<span class="t" style="left:849.87px;top:47px;font-size:18px;line-height:18px;color:#d9d9d9;transform:scaleX(0.9339);">Express Tools</span>
<span class="t" style="left:984.82px;top:47px;font-size:18px;line-height:18px;color:#d9d9d9;transform:scaleX(0.9780);">Featured Apps</span>
<span class="t" style="left:36.30px;top:233px;font-size:18px;line-height:18px;color:#e6e6e6;transform:scaleX(0.9392);">Start</span>
<span class="t" style="left:107.29px;top:233px;font-size:18px;line-height:18px;color:#e6e6e6;transform:scaleX(1.0130);">hiperbole 2</span>
<span class="t" style="left:251.49px;top:233px;font-size:18px;line-height:18px;color:#fff;font-weight:700;transform:scaleX(1.0113);">Drawing3*</span>
<span class="t" style="left:0.98px;top:275px;font-size:18px;line-height:18px;color:#e2e2e2;transform:scaleX(1.0187);">[−][Custom View][2D Wireframe]</span>
<span class="t" style="left:18.78px;top:140px;font-size:18px;line-height:18px;color:#e9e9e9;transform:scaleX(0.9176);">Line</span>
<span class="t" style="left:67.05px;top:140px;font-size:18px;line-height:18px;color:#e9e9e9;transform:scaleX(0.9464);">Polyline</span>
<span class="t" style="left:147.50px;top:140px;font-size:18px;line-height:18px;color:#e9e9e9;transform:scaleX(0.8936);">Circle</span>
<span class="t" style="left:222.40px;top:140px;font-size:18px;line-height:18px;color:#e9e9e9;transform:scaleX(0.9481);">Arc</span>
<span class="t" style="left:135.26px;top:197px;font-size:18px;line-height:18px;color:#e9e9e9;transform:scaleX(0.9380);">Draw</span>
<span class="t" style="left:391.93px;top:197px;font-size:18px;line-height:18px;color:#e9e9e9;transform:scaleX(1.0689);">Modify</span>
<span class="t" style="left:546.80px;top:77px;font-size:60px;line-height:60px;color:#dadada;transform:scaleX(0.9850);">A</span>
<span class="t" style="left:551.50px;top:140px;font-size:18px;line-height:18px;color:#e9e9e9;transform:scaleX(0.8936);">Text</span>
<span class="t" style="left:603.20px;top:140px;font-size:18px;line-height:18px;color:#e9e9e9;transform:scaleX(1.0045);">Dimension</span>
<span class="t" style="left:587.60px;top:197px;font-size:18px;line-height:18px;color:#e9e9e9;transform:scaleX(1.0346);">Annotation</span>
<span class="t" style="left:779.81px;top:140px;font-size:18px;line-height:18px;color:#e9e9e9;transform:scaleX(0.8925);">Layer</span>
<span class="t" style="left:760.03px;top:165px;font-size:18px;line-height:18px;color:#e9e9e9;transform:scaleX(0.9675);">Properties</span>
<span class="t" style="left:966.89px;top:86px;font-size:18px;line-height:18px;color:#e9e9e9;transform:scaleX(1.0121);">pintas</span>
<span class="t" style="left:921.90px;top:197px;font-size:18px;line-height:18px;color:#e9e9e9;transform:scaleX(0.8958);">Layers</span>
<span class="t" style="left:1172.03px;top:138px;font-size:18px;line-height:18px;color:#e9e9e9;transform:scaleX(0.9746);">Insert</span>
<span class="t" style="left:1189.96px;top:197px;font-size:18px;line-height:18px;color:#e9e9e9;transform:scaleX(0.9360);">Block</span>
<span class="t" style="left:1286.62px;top:137px;font-size:18px;line-height:18px;color:#e9e9e9;transform:scaleX(0.9773);">Properties</span>
<span class="t" style="left:1391.30px;top:137px;font-size:18px;line-height:18px;color:#e9e9e9;transform:scaleX(0.9690);">Groups</span>
<span class="t" style="left:1482.72px;top:137px;font-size:18px;line-height:18px;color:#e9e9e9;transform:scaleX(0.9788);">Utilities</span>
<span class="t" style="left:1564.50px;top:137px;font-size:18px;line-height:18px;color:#e9e9e9;transform:scaleX(1.0088);">Clipboard</span>
<span class="t" style="left:1677.10px;top:137px;font-size:18px;line-height:18px;color:#e9e9e9;transform:scaleX(0.9221);">View</span>
<span class="t" style="left:774.75px;top:701px;font-size:25.5px;line-height:25.5px;color:#d4d4d4;font-weight:200;font-family:'DejaVu Sans Light','DejaVu Sans',sans-serif;transform:scaleX(1.1500);">Z</span>
<span class="t" style="left:809.80px;top:733px;font-size:25.5px;line-height:25.5px;color:#d4d4d4;font-weight:200;font-family:'DejaVu Sans Light','DejaVu Sans',sans-serif;transform:scaleX(1.2267);">Y</span>
<span class="t" style="left:840.55px;top:784px;font-size:25.5px;line-height:25.5px;color:#d4d4d4;font-weight:200;font-family:'DejaVu Sans Light','DejaVu Sans',sans-serif;transform:scaleX(1.1500);">X</span>
<span class="t" style="left:1813.30px;top:468px;font-size:15px;line-height:15px;color:#555b68;transform:scaleX(0.9774);">WCS</span>
<span class="t" style="left:526.35px;top:933px;font-size:19px;line-height:19px;color:#6a6a6a;font-style:italic;font-family:'Liberation Mono',monospace;transform:scaleX(0.9527);">Type a command</span>
<span class="t" style="left:35.43px;top:977px;font-size:18px;line-height:18px;color:#fff;font-weight:700;transform:scaleX(1.0701);">Model</span>
<span class="t" style="left:125.53px;top:977px;font-size:18px;line-height:18px;color:#e9e9e9;transform:scaleX(0.9676);">Layout1</span>
<span class="t" style="left:224.42px;top:977px;font-size:18px;line-height:18px;color:#e9e9e9;transform:scaleX(0.9771);">Layout2</span>
<span class="t" style="left:1059.22px;top:981px;font-size:17.5px;line-height:17.5px;color:#f0f0f0;transform:scaleX(0.9837);">MODEL</span>
<span class="t" style="left:1647.28px;top:980px;font-size:18px;line-height:18px;color:#f0f0f0;transform:scaleX(0.7205);">1:1</span>
<span class="t" style="left:52.70px;top:1022px;font-size:17px;line-height:17px;color:#fff;">1</span>
<span class="t" style="left:75.37px;top:1024px;font-size:17.5px;line-height:17.5px;color:#fff;transform:scaleX(0.9342);">19°C</span>
<span class="t" style="left:76.30px;top:1048px;font-size:17.5px;line-height:17.5px;color:#cfcfcf;transform:scaleX(1.0499);">Ger. Nublado</span>
<span class="t" style="left:587.78px;top:1034px;font-size:21px;line-height:21px;color:#4a4a4a;transform:scaleX(0.9745);">Procurar</span>
<span class="t" style="left:1299.50px;top:1023px;font-size:15.5px;line-height:15.5px;color:#0a0f18;transform:scaleX(0.9807);">29</span>
<span class="t" style="left:1354.40px;top:1030px;font-size:19px;line-height:19px;color:#fff;font-weight:700;transform:scaleX(1.0143);">A</span>
<span class="t" style="left:1354.10px;top:1053px;font-size:7.5px;line-height:7.5px;color:#fff;font-weight:700;transform:scaleX(0.8614);">CAD</span>
<span class="t" style="left:1847.26px;top:1024px;font-size:16.5px;line-height:16.5px;color:#fff;transform:scaleX(1.0445);">12:34</span>
<span class="t" style="left:1799.00px;top:1048px;font-size:16.5px;line-height:16.5px;color:#fff;transform:scaleX(1.1067);">30/10/2025</span>
</div></body></html>
